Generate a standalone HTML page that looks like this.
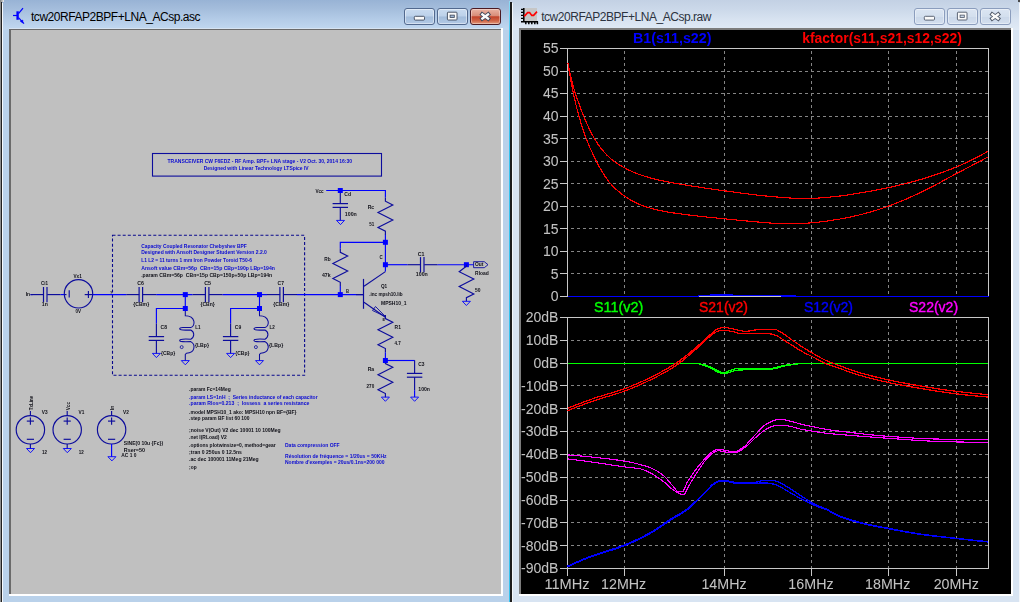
<!DOCTYPE html>
<html lang="en"><head><meta charset="utf-8"><title>LTspice IV - tcw20RFAP2BPF+LNA_ACsp</title>
<style>
html,body{margin:0;padding:0}
body{width:1020px;height:602px;overflow:hidden;position:relative;background:#b9d1ea;font-family:"Liberation Sans", sans-serif;}
.abs{position:absolute}
#lw{left:0;top:0;width:510px;height:602px;background:#b9d1ea;overflow:hidden}
#lw .tb{left:0;top:0;width:510px;height:30px;background:linear-gradient(#98b3d5 0,#a3bcdb 8px,#b2cae6 18px,#bfd6ef 28px)}
#rw{left:510px;top:0;width:510px;height:602px;background:#d8e4f2;overflow:hidden}
#rw .tb{left:0;top:0;width:510px;height:30px;background:linear-gradient(#c3d1e4 0,#ccd9ea 10px,#d8e3f1 20px,#dfe9f5 29px)}
.ttl{font-size:12px;color:#000;white-space:nowrap;letter-spacing:-0.46px}
.btn{top:8px;height:14.8px;width:28.6px;border-radius:3px;box-sizing:content-box}
.a{border:1px solid #52698e;background:linear-gradient(#c9dbf0 0,#bcd1ea 48%,#a2bcdb 52%,#b3cae6 100%);box-shadow:inset 0 0 0 1px rgba(255,255,255,.45)}
.x{border:1px solid #4b1a22;background:linear-gradient(#e9b3a3 0,#d88d79 45%,#c1432a 52%,#cf6446 78%,#e49c7e 100%);box-shadow:inset 0 0 0 1px rgba(255,255,255,.35)}
.i{border:1px solid #8b9dbd;background:linear-gradient(#dbe5f2 0,#d3dfee 50%,#cad7e9 52%,#d3dfee 100%);box-shadow:inset 0 0 0 1px rgba(255,255,255,.4)}
svg{position:absolute;left:0;top:0;will-change:transform}
svg text{font-family:"Liberation Sans", sans-serif;white-space:pre}
</style></head><body>

<div id="lw" class="abs"><div class="tb abs"></div>
<div class="abs" style="left:0;top:0;width:1px;height:602px;background:#8c8c8c"></div>
<div class="abs" style="left:0.9px;top:2px;width:1.2px;height:600px;background:#202020"></div>
<div class="abs" style="left:2.1px;top:2.5px;width:1.1px;height:600px;background:#f6f9fd"></div>
<div class="abs" style="left:1px;top:0;width:3px;height:2px;background:linear-gradient(90deg,#9a9a9a,#e8eef5)"></div>
<div class="abs" style="left:509px;top:1px;width:1px;height:601px;background:linear-gradient(#8fdcf5,#36c3ee 40px)"></div>
<div class="abs" style="left:9px;top:27.6px;width:494.2px;height:568px;background:#fff"></div>
<div class="abs" style="left:9px;top:27.6px;width:492.4px;height:1.2px;background:#d6e3f2"></div>
<div class="abs" style="left:9.4px;top:28.7px;width:492px;height:565.2px;background:#6a6a6a"></div>
<div class="abs" style="left:10.7px;top:29.9px;width:490.7px;height:564px;background:#c0c0c0"></div>
<div class="abs ttl" style="left:31px;top:9.6px">tcw20RFAP2BPF+LNA_ACsp.asc</div>
<div class="abs btn a" style="left:404.2px"></div><div class="abs btn a" style="left:437.1px"></div><div class="abs btn x" style="left:470.1px"></div>
</div>
<div id="rw" class="abs"><div class="tb abs"></div>
<div class="abs" style="left:0;top:2px;width:1.7px;height:600px;background:#1d1d1d"></div>
<div class="abs" style="left:1.7px;top:3px;width:1px;height:599px;background:#f4f7fb"></div>
<div class="abs" style="left:9.4px;top:28.4px;width:493.2px;height:567.2px;background:#fff"></div>
<div class="abs" style="left:9.4px;top:28.4px;width:491.9px;height:565.4px;background:#7c7c7c"></div>
<div class="abs" style="left:10.5px;top:29.8px;width:490.8px;height:564px;background:#000"></div>
<div class="abs ttl" style="left:31.2px;top:9.6px;color:#2c3340">tcw20RFAP2BPF+LNA_ACsp.raw</div>
<div class="abs" style="left:508.6px;top:3px;width:1px;height:599px;background:#f4f7fb"></div>
<div class="abs" style="left:508px;top:0;width:2px;height:2px;background:#4a4a4a"></div>
<div class="abs btn i" style="left:404.2px"></div><div class="abs btn i" style="left:437.1px"></div><div class="abs btn i" style="left:470.2px"></div>
</div>
<svg width="1020" height="602" viewBox="0 0 1020 602">
<g stroke="#0000ff" fill="none" stroke-width="1.2"><path d="M13 15.5H17.5"/><path d="M17.6 11.3V19.8" stroke-width="2.4"/><path d="M18.5 13.6L23 8.2"/><path d="M18.5 17.6L24 23.6"/><path d="M20.4 21.2L22.8 20.2L22.6 22.8Z" fill="#0000ff" stroke-width="0.8"/></g>
<g><rect x="524" y="8" width="13" height="13.4" fill="#c6c6c6"/><path d="M523.8 8V22.4M521 21.8H538" stroke="#000" stroke-width="1.5" fill="none"/><path d="M521 9.4H523.5M521 12.4H523.5M521 15.4H523.5M521 18.4H523.5" stroke="#000" stroke-width="1.4"/><path d="M525.8 21.5V24.2M528.8 21.5V24.2M531.8 21.5V24.2M534.8 21.5V24.2M537.4 21.5V24.2" stroke="#000" stroke-width="1.5"/><path d="M524.2 16.4L527.6 12.6H529.6L531.8 15.4H533.6L537 11.6" stroke="#ff0000" stroke-width="1.6" fill="none"/></g>
<rect x="414.3" y="16.3" width="10.2" height="3.8" rx="1" fill="#fafafa" stroke="#3c4658" stroke-width="0.9"/>
<rect x="447.4" y="12.2" width="9.6" height="7.8" rx="0.8" fill="#fafafa" stroke="#3c4658" stroke-width="0.9"/>
<rect x="450.1" y="15.1" width="4.2" height="2.4" fill="#9fb6d4" stroke="#3c4658" stroke-width="0.8"/>
<path d="M480.6 13.2L489.8 19.8M489.8 13.2L480.6 19.8" stroke="#3c4658" stroke-width="4.1" stroke-linecap="butt" fill="none"/>
<path d="M481.4 13.8L489 19.2M489 13.8L481.4 19.2" stroke="#fafafa" stroke-width="2.3" stroke-linecap="butt" fill="none"/>
<rect x="924.3" y="16.3" width="10.2" height="3.8" rx="1" fill="#fafafa" stroke="#4d5666" stroke-width="0.9"/>
<rect x="957.4" y="12.2" width="9.6" height="7.8" rx="0.8" fill="#fafafa" stroke="#4d5666" stroke-width="0.9"/>
<rect x="960.1" y="15.1" width="4.2" height="2.4" fill="#c9d6e8" stroke="#4d5666" stroke-width="0.8"/>
<path d="M990.6 13.2L999.8 19.8M999.8 13.2L990.6 19.8" stroke="#4d5666" stroke-width="4.1" stroke-linecap="butt" fill="none"/>
<path d="M991.4 13.8L999 19.2M999 13.8L991.4 19.2" stroke="#fafafa" stroke-width="2.3" stroke-linecap="butt" fill="none"/>
<g id="schematic">
<rect x="152.5" y="153.5" width="229" height="22.6" fill="none" stroke="#0c0c9c" stroke-width="1.1"/>
<text x="167.5" y="163.02" font-size="5.6" fill="#0a0ad2" font-weight="bold" textLength="184.6" lengthAdjust="spacingAndGlyphs">TRANSCEIVER CW F6EDZ - RF Amp. BPF+ LNA stage - V2 Oct. 30, 2014 16:30</text>
<text x="203.7" y="170.02" font-size="5.6" fill="#0a0ad2" font-weight="bold" textLength="105" lengthAdjust="spacingAndGlyphs">Designed with Linear Technology LTSpice IV</text>
<rect x="112.5" y="235.3" width="192.1" height="140" fill="none" stroke="#08088c" stroke-width="1.1" stroke-dasharray="3 2.1"/>
<text x="141.2" y="247.72" font-size="5.6" fill="#0a0ad2" font-weight="bold" textLength="105.5" lengthAdjust="spacingAndGlyphs">Capacity Coupled Resonator Chebyshev BPF</text>
<text x="141.2" y="253.82" font-size="5.6" fill="#0a0ad2" font-weight="bold" textLength="125.7" lengthAdjust="spacingAndGlyphs">Designed with Ansoft Designer Student Version 2.2.0</text>
<text x="141.2" y="262.12" font-size="5.6" fill="#0a0ad2" font-weight="bold" textLength="110.8" lengthAdjust="spacingAndGlyphs">L1 L2 = 11 turns 1 mm Iron Powder Toroid T50-6</text>
<text x="141.2" y="270.12" font-size="5.6" fill="#0a0ad2" font-weight="bold" textLength="133.7" lengthAdjust="spacingAndGlyphs">Ansoft value CBm=56p  CBn=15p CBp=190p LBp=194n</text>
<text x="141.2" y="277.02" font-size="5.6" fill="#101018" font-weight="bold" textLength="131" lengthAdjust="spacingAndGlyphs">.param CBm=56p  CBn=15p CBp=150p+50p LBp=194n</text>
<polyline points="92.7,294.6 126.2,294.6" fill="none" stroke="#0000ff" stroke-width="1.15"/>
<polyline points="156.2,294.6 192.5,294.6" fill="none" stroke="#0000ff" stroke-width="1.15"/>
<polyline points="222.5,294.6 267,294.6" fill="none" stroke="#0000ff" stroke-width="1.15"/>
<polyline points="297,294.6 363.5,294.6" fill="none" stroke="#0000ff" stroke-width="1.15"/>
<text x="25.7" y="296.12" font-size="5.6" fill="#101018" font-weight="bold" textLength="4.4" lengthAdjust="spacingAndGlyphs">In</text>
<polyline points="30.5,294.6 32.5,294.6" fill="none" stroke="#0000ff" stroke-width="1.15"/>
<polyline points="30.6,294.6 43.7,294.6" fill="none" stroke="#0c0c9c" stroke-width="1.15"/>
<polyline points="43.5,287 43.5,302.2" fill="none" stroke="#0c0c9c" stroke-width="1.2"/>
<polyline points="47,287 47,302.2" fill="none" stroke="#0c0c9c" stroke-width="1.2"/>
<polyline points="47.2,294.6 60.6,294.6" fill="none" stroke="#0c0c9c" stroke-width="1.15"/>
<polyline points="60.6,294.6 64.3,294.6" fill="none" stroke="#0000ff" stroke-width="1.15"/>
<text x="41.1" y="284.92" font-size="5.6" fill="#101018" font-weight="bold" textLength="7" lengthAdjust="spacingAndGlyphs">Ci1</text>
<text x="41.8" y="306.12" font-size="5.6" fill="#101018" font-weight="bold" textLength="6" lengthAdjust="spacingAndGlyphs">1n</text>
<circle cx="78.5" cy="293.8" r="14.2" fill="none" stroke="#0c0c9c" stroke-width="1.15"/>
<polyline points="64.3,294.6 66.5,294.6" fill="none" stroke="#0c0c9c" stroke-width="1.15"/>
<polyline points="69.2,290.3 69.2,297.4" fill="none" stroke="#0c0c9c" stroke-width="1.15"/>
<polyline points="84.7,294.6 92.7,294.6" fill="none" stroke="#0c0c9c" stroke-width="1.15"/>
<polyline points="88.4,291 88.4,298" fill="none" stroke="#0c0c9c" stroke-width="1.15"/>
<text x="73.5" y="278.22" font-size="5.6" fill="#101018" font-weight="bold" textLength="8.2" lengthAdjust="spacingAndGlyphs">Vx1</text>
<text x="75.5" y="313.12" font-size="5.6" fill="#101018" font-weight="bold" textLength="5.5" lengthAdjust="spacingAndGlyphs">0V</text>
<text x="110.4" y="292.64" font-size="4" fill="#101018" font-weight="bold" textLength="1.6" lengthAdjust="spacingAndGlyphs">y</text>
<polyline points="126.2,294.6 139.3,294.6" fill="none" stroke="#0c0c9c" stroke-width="1.15"/>
<polyline points="139.1,287 139.1,302.2" fill="none" stroke="#0c0c9c" stroke-width="1.2"/>
<polyline points="142.6,287 142.6,302.2" fill="none" stroke="#0c0c9c" stroke-width="1.2"/>
<polyline points="142.8,294.6 156.2,294.6" fill="none" stroke="#0c0c9c" stroke-width="1.15"/>
<text x="137.2" y="284.72" font-size="5.6" fill="#101018" font-weight="bold" textLength="6.7" lengthAdjust="spacingAndGlyphs">C6</text>
<text x="133.2" y="306.22" font-size="5.6" fill="#101018" font-weight="bold" textLength="16" lengthAdjust="spacingAndGlyphs">{CBm}</text>
<polyline points="192.5,294.6 205.6,294.6" fill="none" stroke="#0c0c9c" stroke-width="1.15"/>
<polyline points="205.4,287 205.4,302.2" fill="none" stroke="#0c0c9c" stroke-width="1.2"/>
<polyline points="208.9,287 208.9,302.2" fill="none" stroke="#0c0c9c" stroke-width="1.2"/>
<polyline points="209.1,294.6 222.5,294.6" fill="none" stroke="#0c0c9c" stroke-width="1.15"/>
<text x="204.2" y="284.72" font-size="5.6" fill="#101018" font-weight="bold" textLength="6.9" lengthAdjust="spacingAndGlyphs">C5</text>
<text x="200.5" y="306.22" font-size="5.6" fill="#101018" font-weight="bold" textLength="14.3" lengthAdjust="spacingAndGlyphs">{CBn}</text>
<polyline points="267,294.6 280.1,294.6" fill="none" stroke="#0c0c9c" stroke-width="1.15"/>
<polyline points="279.9,287 279.9,302.2" fill="none" stroke="#0c0c9c" stroke-width="1.2"/>
<polyline points="283.4,287 283.4,302.2" fill="none" stroke="#0c0c9c" stroke-width="1.2"/>
<polyline points="283.6,294.6 297,294.6" fill="none" stroke="#0c0c9c" stroke-width="1.15"/>
<text x="277.6" y="284.72" font-size="5.6" fill="#101018" font-weight="bold" textLength="6.4" lengthAdjust="spacingAndGlyphs">C7</text>
<text x="273.3" y="306.22" font-size="5.6" fill="#101018" font-weight="bold" textLength="16" lengthAdjust="spacingAndGlyphs">{CBm}</text>
<polyline points="185.3,294.6 185.3,308.5" fill="none" stroke="#0000ff" stroke-width="1.15"/>
<polyline points="185.3,308.5 156.4,308.5 156.4,323.5" fill="none" stroke="#0000ff" stroke-width="1.15"/>
<polyline points="156.4,323.5 156.4,336.6" fill="none" stroke="#0c0c9c" stroke-width="1.15"/>
<polyline points="148.7,336.6 164.1,336.6" fill="none" stroke="#0c0c9c" stroke-width="1.2"/>
<polyline points="148.7,340.4 164.1,340.4" fill="none" stroke="#0c0c9c" stroke-width="1.2"/>
<polyline points="156.4,340.4 156.4,353.5" fill="none" stroke="#0c0c9c" stroke-width="1.15"/>
<polyline points="152.4,353.4 160.4,353.4 156.4,357.6 152.4,353.4" fill="none" stroke="#0000ff" stroke-width="0.9"/>
<path d="M185.3 308.5 L185.3 315.7 C195.8 315.9 195.8 326.1 190.8 327.6 C184.3 327.3 179.7 327.4 179.7 328.8 C179.7 330.2 184.3 330.3 190.8 330 C194.7 332 194.7 337.2 190.8 339.2 C184.3 338.9 179.7 339 179.7 340.4 C179.7 341.8 184.3 341.9 190.8 341.6 C195.8 344.4 195.3 353.1 186.5 353.2 L185.3 354.5 L185.3 360.5" fill="none" stroke="#0c0c9c" stroke-width="1.05"/>
<circle cx="181.7" cy="347.1" r="1.5" fill="none" stroke="#0c0c9c" stroke-width="0.8"/>
<polyline points="181.3,360.6 189.3,360.6 185.3,364.8 181.3,360.6" fill="none" stroke="#0000ff" stroke-width="0.9"/>
<rect x="182.8" y="292.1" width="5" height="5" fill="#0000ff"/>
<rect x="182.8" y="306" width="5" height="5" fill="#0000ff"/>
<text x="160.6" y="328.82" font-size="5.6" fill="#101018" font-weight="bold" textLength="6.4" lengthAdjust="spacingAndGlyphs">C8</text>
<text x="161.1" y="355.42" font-size="5.6" fill="#101018" font-weight="bold" textLength="14.1" lengthAdjust="spacingAndGlyphs">{CBp}</text>
<text x="195.2" y="328.82" font-size="5.6" fill="#101018" font-weight="bold" textLength="5.3" lengthAdjust="spacingAndGlyphs">L1</text>
<text x="194.9" y="347.12" font-size="5.6" fill="#101018" font-weight="bold" textLength="14.1" lengthAdjust="spacingAndGlyphs">{LBp}</text>
<polyline points="259.5,294.6 259.5,308.5" fill="none" stroke="#0000ff" stroke-width="1.15"/>
<polyline points="259.5,308.5 230.6,308.5 230.6,323.5" fill="none" stroke="#0000ff" stroke-width="1.15"/>
<polyline points="230.6,323.5 230.6,336.6" fill="none" stroke="#0c0c9c" stroke-width="1.15"/>
<polyline points="222.9,336.6 238.3,336.6" fill="none" stroke="#0c0c9c" stroke-width="1.2"/>
<polyline points="222.9,340.4 238.3,340.4" fill="none" stroke="#0c0c9c" stroke-width="1.2"/>
<polyline points="230.6,340.4 230.6,353.5" fill="none" stroke="#0c0c9c" stroke-width="1.15"/>
<polyline points="226.6,353.4 234.6,353.4 230.6,357.6 226.6,353.4" fill="none" stroke="#0000ff" stroke-width="0.9"/>
<path d="M259.5 308.5 L259.5 315.7 C270 315.9 270 326.1 265 327.6 C258.5 327.3 253.9 327.4 253.9 328.8 C253.9 330.2 258.5 330.3 265 330 C268.9 332 268.9 337.2 265 339.2 C258.5 338.9 253.9 339 253.9 340.4 C253.9 341.8 258.5 341.9 265 341.6 C270 344.4 269.5 353.1 260.7 353.2 L259.5 354.5 L259.5 360.5" fill="none" stroke="#0c0c9c" stroke-width="1.05"/>
<circle cx="255.9" cy="347.1" r="1.5" fill="none" stroke="#0c0c9c" stroke-width="0.8"/>
<polyline points="255.5,360.6 263.5,360.6 259.5,364.8 255.5,360.6" fill="none" stroke="#0000ff" stroke-width="0.9"/>
<rect x="257" y="292.1" width="5" height="5" fill="#0000ff"/>
<rect x="257" y="306" width="5" height="5" fill="#0000ff"/>
<text x="234.8" y="328.82" font-size="5.6" fill="#101018" font-weight="bold" textLength="6.4" lengthAdjust="spacingAndGlyphs">C9</text>
<text x="235.3" y="355.42" font-size="5.6" fill="#101018" font-weight="bold" textLength="14.1" lengthAdjust="spacingAndGlyphs">{CBp}</text>
<text x="269.4" y="328.82" font-size="5.6" fill="#101018" font-weight="bold" textLength="5.3" lengthAdjust="spacingAndGlyphs">L2</text>
<text x="269.1" y="347.12" font-size="5.6" fill="#101018" font-weight="bold" textLength="14.1" lengthAdjust="spacingAndGlyphs">{LBp}</text>
<text x="315.4" y="192.72" font-size="5.6" fill="#101018" font-weight="bold" textLength="8.3" lengthAdjust="spacingAndGlyphs">Vcc</text>
<polyline points="326.2,190.5 385.4,190.5 385.4,197.6" fill="none" stroke="#0000ff" stroke-width="1.15"/>
<polyline points="340.3,190.5 340.3,203.6" fill="none" stroke="#0c0c9c" stroke-width="1.15"/>
<polyline points="332.6,203.6 348,203.6" fill="none" stroke="#0c0c9c" stroke-width="1.2"/>
<polyline points="332.6,207.4 348,207.4" fill="none" stroke="#0c0c9c" stroke-width="1.2"/>
<polyline points="340.3,207.4 340.3,220.5" fill="none" stroke="#0c0c9c" stroke-width="1.15"/>
<polyline points="336.5,220.4 344.5,220.4 340.5,224.6 336.5,220.4" fill="none" stroke="#0000ff" stroke-width="0.9"/>
<rect x="337.8" y="188" width="5" height="5" fill="#0000ff"/>
<text x="344.3" y="196.22" font-size="5.6" fill="#101018" font-weight="bold" textLength="6.7" lengthAdjust="spacingAndGlyphs">Cd</text>
<text x="344.8" y="216.12" font-size="5.6" fill="#101018" font-weight="bold" textLength="12" lengthAdjust="spacingAndGlyphs">100n</text>
<polyline points="385.4,197.5 385.4,201.2 392.8,204.95 378,212.45 392.8,219.95 378,227.45 385.4,231.2 385.4,234.9" fill="none" stroke="#0c0c9c" stroke-width="1.15"/>
<text x="367.7" y="208.92" font-size="5.6" fill="#101018" font-weight="bold" textLength="6.5" lengthAdjust="spacingAndGlyphs">Rc</text>
<text x="369.2" y="226.12" font-size="5.6" fill="#101018" font-weight="bold" textLength="5" lengthAdjust="spacingAndGlyphs">51</text>
<polyline points="385.4,234.8 385.4,271.6" fill="none" stroke="#0000ff" stroke-width="1.15"/>
<polyline points="385.4,242.3 340.3,242.3 340.3,248.6" fill="none" stroke="#0000ff" stroke-width="1.15"/>
<polyline points="340.3,248.6 340.3,252.3 347.7,256.05 332.9,263.55 347.7,271.05 332.9,278.55 340.3,282.3 340.3,286" fill="none" stroke="#0c0c9c" stroke-width="1.15"/>
<polyline points="340.3,286 340.3,294.6" fill="none" stroke="#0000ff" stroke-width="1.15"/>
<text x="324.2" y="261.22" font-size="5.6" fill="#101018" font-weight="bold" textLength="6.4" lengthAdjust="spacingAndGlyphs">Rb</text>
<text x="321.9" y="276.62" font-size="5.6" fill="#101018" font-weight="bold" textLength="8.7" lengthAdjust="spacingAndGlyphs">47k</text>
<rect x="382.9" y="239.8" width="5" height="5" fill="#0000ff"/>
<rect x="382.9" y="262.2" width="5" height="5" fill="#0000ff"/>
<rect x="337.8" y="292.1" width="5" height="5" fill="#0000ff"/>
<text x="346" y="292.82" font-size="5.6" fill="#101018" font-weight="bold" textLength="3" lengthAdjust="spacingAndGlyphs">B</text>
<text x="379.6" y="259.02" font-size="4.5" fill="#101018" font-weight="bold" textLength="3.2" lengthAdjust="spacingAndGlyphs">C</text>
<polyline points="363.5,278.9 363.5,308.8" fill="none" stroke="#0c0c9c" stroke-width="1.2"/>
<polyline points="364,286.2 385.4,271.6" fill="none" stroke="#0c0c9c" stroke-width="1.15"/>
<polyline points="356,294.6 363.5,294.6" fill="none" stroke="#0c0c9c" stroke-width="1.15"/>
<polyline points="364,302.2 385.4,317.2" fill="none" stroke="#0c0c9c" stroke-width="1.15"/>
<polyline points="372.5,310.5 375.5,306.5 385.5,316.6 372.5,310.5" fill="none" stroke="#0c0c9c" stroke-width="0.9"/>
<text x="381" y="287.92" font-size="5.6" fill="#101018" font-weight="bold" textLength="6.2" lengthAdjust="spacingAndGlyphs">Q1</text>
<text x="369.2" y="296.12" font-size="5.6" fill="#101018" font-weight="bold" textLength="33.4" lengthAdjust="spacingAndGlyphs">.inc mpsh10.lib</text>
<text x="381" y="304.82" font-size="5.6" fill="#101018" font-weight="bold" textLength="25.6" lengthAdjust="spacingAndGlyphs">MPSH10_1</text>
<text x="382.4" y="321.11" font-size="4.2" fill="#101018" font-weight="bold" textLength="2.6" lengthAdjust="spacingAndGlyphs">E</text>
<polyline points="385.4,264.7 407.6,264.7" fill="none" stroke="#0000ff" stroke-width="1.15"/>
<polyline points="407.6,264.7 420.7,264.7" fill="none" stroke="#0c0c9c" stroke-width="1.15"/>
<polyline points="420.5,257.1 420.5,272.3" fill="none" stroke="#0c0c9c" stroke-width="1.2"/>
<polyline points="424,257.1 424,272.3" fill="none" stroke="#0c0c9c" stroke-width="1.2"/>
<polyline points="424.2,264.7 437.6,264.7" fill="none" stroke="#0c0c9c" stroke-width="1.15"/>
<polyline points="437.6,264.7 473.6,264.7" fill="none" stroke="#0000ff" stroke-width="1.15"/>
<text x="417.8" y="256.02" font-size="5.6" fill="#101018" font-weight="bold" textLength="6.7" lengthAdjust="spacingAndGlyphs">C1</text>
<text x="415.8" y="276.12" font-size="5.6" fill="#101018" font-weight="bold" textLength="12" lengthAdjust="spacingAndGlyphs">100n</text>
<rect x="463.9" y="262.2" width="5" height="5" fill="#0000ff"/>
<polyline points="473.6,261.7 484.3,261.7 488,264.7 484.3,267.7 473.6,267.7 473.6,261.7" fill="none" stroke="#0c0c9c" stroke-width="0.9"/>
<text x="475" y="266.43" font-size="4.8" fill="#101018" font-weight="bold" textLength="8.4" lengthAdjust="spacingAndGlyphs">Out</text>
<polyline points="466.4,264.7 466.4,266.2 459.2,271.7 473.8,279.1 459.2,286.6 473.8,294.1 466.4,297.7 466.4,301.3" fill="none" stroke="#0c0c9c" stroke-width="1.15"/>
<polyline points="462.4,301.3 470.4,301.3 466.4,305.5 462.4,301.3" fill="none" stroke="#0000ff" stroke-width="0.9"/>
<text x="475.1" y="274.92" font-size="5.6" fill="#101018" font-weight="bold" textLength="13.7" lengthAdjust="spacingAndGlyphs">Rload</text>
<text x="475.1" y="291.62" font-size="5.6" fill="#101018" font-weight="bold" textLength="5.5" lengthAdjust="spacingAndGlyphs">50</text>
<polyline points="385.4,314.9 385.4,318.6 392.8,322.35 378,329.85 392.8,337.35 378,344.85 385.4,348.6 385.4,352.3" fill="none" stroke="#0c0c9c" stroke-width="1.15"/>
<text x="394.6" y="328.92" font-size="5.6" fill="#101018" font-weight="bold" textLength="6.3" lengthAdjust="spacingAndGlyphs">R1</text>
<text x="394.6" y="345.02" font-size="5.6" fill="#101018" font-weight="bold" textLength="6.3" lengthAdjust="spacingAndGlyphs">4.7</text>
<polyline points="385.4,352.3 385.4,360.5" fill="none" stroke="#0000ff" stroke-width="1.15"/>
<polyline points="385.4,360.5 414.6,360.5" fill="none" stroke="#0000ff" stroke-width="1.15"/>
<polyline points="414.6,360.3 414.6,373.4" fill="none" stroke="#0c0c9c" stroke-width="1.15"/>
<polyline points="406.9,373.4 422.3,373.4" fill="none" stroke="#0c0c9c" stroke-width="1.2"/>
<polyline points="406.9,377.2 422.3,377.2" fill="none" stroke="#0c0c9c" stroke-width="1.2"/>
<polyline points="414.6,377.2 414.6,390.3" fill="none" stroke="#0c0c9c" stroke-width="1.15"/>
<polyline points="410.6,397.1 418.6,397.1 414.6,401.3 410.6,397.1" fill="none" stroke="#0000ff" stroke-width="0.9"/>
<polyline points="414.6,390.3 414.6,397.1" fill="none" stroke="#0000ff" stroke-width="1.15"/>
<text x="418.3" y="366.02" font-size="5.6" fill="#101018" font-weight="bold" textLength="6.2" lengthAdjust="spacingAndGlyphs">C3</text>
<text x="418.3" y="391.12" font-size="5.6" fill="#101018" font-weight="bold" textLength="11.7" lengthAdjust="spacingAndGlyphs">100n</text>
<polyline points="385.4,359.9 385.4,363.6 392.8,367.35 378,374.85 392.8,382.35 378,389.85 385.4,393.6 385.4,397.3" fill="none" stroke="#0c0c9c" stroke-width="1.15"/>
<polyline points="381.4,397.1 389.4,397.1 385.4,401.3 381.4,397.1" fill="none" stroke="#0000ff" stroke-width="0.9"/>
<rect x="382.9" y="358" width="5" height="5" fill="#0000ff"/>
<text x="367.7" y="371.02" font-size="5.6" fill="#101018" font-weight="bold" textLength="6.5" lengthAdjust="spacingAndGlyphs">Ra</text>
<text x="366.5" y="387.92" font-size="5.6" fill="#101018" font-weight="bold" textLength="7.7" lengthAdjust="spacingAndGlyphs">270</text>
<circle cx="30.4" cy="429.8" r="14.2" fill="none" stroke="#0c0c9c" stroke-width="1.15"/>
<polyline points="30.4,411.1 30.4,415.6" fill="none" stroke="#0c0c9c" stroke-width="1.15"/>
<polyline points="26.8,421.1 34,421.1" fill="none" stroke="#0c0c9c" stroke-width="1.15"/>
<polyline points="30.4,417.5 30.4,424.7" fill="none" stroke="#0c0c9c" stroke-width="1.15"/>
<polyline points="26.8,439.3 34,439.3" fill="none" stroke="#0c0c9c" stroke-width="1.15"/>
<text x="41.8" y="413.92" font-size="5.6" fill="#101018" font-weight="bold" textLength="5.8" lengthAdjust="spacingAndGlyphs">V3</text>
<text x="30.8" y="412.21" font-size="5.3" fill="#101018" font-weight="bold" textLength="14.6" lengthAdjust="spacingAndGlyphs" transform="rotate(-90 30.8 410.3)">TxLine</text>
<polyline points="30.4,444 30.4,448.5" fill="none" stroke="#0c0c9c" stroke-width="1.15"/>
<polyline points="26.5,448.5 34.5,448.5 30.5,452.7 26.5,448.5" fill="none" stroke="#0000ff" stroke-width="0.9"/>
<text x="42" y="454.22" font-size="5.6" fill="#101018" font-weight="bold" textLength="5" lengthAdjust="spacingAndGlyphs">12</text>
<circle cx="67.2" cy="429.8" r="14.2" fill="none" stroke="#0c0c9c" stroke-width="1.15"/>
<polyline points="67.2,411.1 67.2,415.6" fill="none" stroke="#0c0c9c" stroke-width="1.15"/>
<polyline points="63.6,421.1 70.8,421.1" fill="none" stroke="#0c0c9c" stroke-width="1.15"/>
<polyline points="67.2,417.5 67.2,424.7" fill="none" stroke="#0c0c9c" stroke-width="1.15"/>
<polyline points="63.6,439.3 70.8,439.3" fill="none" stroke="#0c0c9c" stroke-width="1.15"/>
<text x="78.6" y="413.92" font-size="5.6" fill="#101018" font-weight="bold" textLength="5.8" lengthAdjust="spacingAndGlyphs">V1</text>
<text x="67.6" y="412.21" font-size="5.3" fill="#101018" font-weight="bold" textLength="8.4" lengthAdjust="spacingAndGlyphs" transform="rotate(-90 67.6 410.3)">Vcc</text>
<polyline points="67.2,444 67.2,448.5" fill="none" stroke="#0c0c9c" stroke-width="1.15"/>
<polyline points="63.3,448.5 71.3,448.5 67.3,452.7 63.3,448.5" fill="none" stroke="#0000ff" stroke-width="0.9"/>
<text x="78.8" y="454.22" font-size="5.6" fill="#101018" font-weight="bold" textLength="5" lengthAdjust="spacingAndGlyphs">12</text>
<circle cx="111.6" cy="429.8" r="14.2" fill="none" stroke="#0c0c9c" stroke-width="1.15"/>
<polyline points="111.6,411.1 111.6,415.6" fill="none" stroke="#0c0c9c" stroke-width="1.15"/>
<polyline points="108,421.1 115.2,421.1" fill="none" stroke="#0c0c9c" stroke-width="1.15"/>
<polyline points="111.6,417.5 111.6,424.7" fill="none" stroke="#0c0c9c" stroke-width="1.15"/>
<polyline points="108,439.3 115.2,439.3" fill="none" stroke="#0c0c9c" stroke-width="1.15"/>
<text x="123" y="413.92" font-size="5.6" fill="#101018" font-weight="bold" textLength="5.8" lengthAdjust="spacingAndGlyphs">V2</text>
<text x="112" y="412.21" font-size="5.3" fill="#101018" font-weight="bold" textLength="4.6" lengthAdjust="spacingAndGlyphs" transform="rotate(-90 112 410.3)">In</text>
<polyline points="111.6,444 111.6,456.7" fill="none" stroke="#0000ff" stroke-width="1.15"/>
<polyline points="107.9,456.7 115.9,456.7 111.9,460.9 107.9,456.7" fill="none" stroke="#0000ff" stroke-width="0.9"/>
<text x="123.8" y="445.02" font-size="5.6" fill="#101018" font-weight="bold" textLength="39.3" lengthAdjust="spacingAndGlyphs">SINE(0 10u {Fc})</text>
<text x="123.8" y="452.22" font-size="5.6" fill="#101018" font-weight="bold" textLength="21.2" lengthAdjust="spacingAndGlyphs">Rser=50</text>
<text x="121.3" y="456.92" font-size="5.6" fill="#101018" font-weight="bold" textLength="15.2" lengthAdjust="spacingAndGlyphs">AC 1 0</text>
<text x="189.1" y="391.22" font-size="5.6" fill="#101018" font-weight="bold" textLength="41.6" lengthAdjust="spacingAndGlyphs">.param Fc=14Meg</text>
<text x="189.1" y="399.02" font-size="5.6" fill="#0a0ad2" font-weight="bold" textLength="128.5" lengthAdjust="spacingAndGlyphs">.param LS=1nH  ;  Series inductance of each capacitor</text>
<text x="189.1" y="405.02" font-size="5.6" fill="#0a0ad2" font-weight="bold" textLength="120.3" lengthAdjust="spacingAndGlyphs">.param Rlos=0.213  ;  lossess  a series resistance</text>
<text x="189.1" y="414.12" font-size="5.6" fill="#101018" font-weight="bold" textLength="107.4" lengthAdjust="spacingAndGlyphs">.model MPSH10_1 ako: MPSH10 npn BF={BF}</text>
<text x="189.1" y="420.12" font-size="5.6" fill="#101018" font-weight="bold" textLength="60.4" lengthAdjust="spacingAndGlyphs">.step param BF list 60 100</text>
<text x="189.1" y="432.22" font-size="5.6" fill="#101018" font-weight="bold" textLength="91.6" lengthAdjust="spacingAndGlyphs">;noise V(Out) V2 dec 10001 10 100Meg</text>
<text x="189.1" y="439.12" font-size="5.6" fill="#101018" font-weight="bold" textLength="37.7" lengthAdjust="spacingAndGlyphs">.net I(RLoad) V2</text>
<text x="189.1" y="447.12" font-size="5.6" fill="#101018" font-weight="bold" textLength="86.5" lengthAdjust="spacingAndGlyphs">.options plotwinsize=0, method=gear</text>
<text x="189.1" y="454.02" font-size="5.6" fill="#101018" font-weight="bold" textLength="52.8" lengthAdjust="spacingAndGlyphs">;tran 0 250us 0 12.5ns</text>
<text x="189.1" y="461.12" font-size="5.6" fill="#101018" font-weight="bold" textLength="69.6" lengthAdjust="spacingAndGlyphs">.ac dec 100001 11Meg 21Meg</text>
<text x="189.1" y="469.32" font-size="5.6" fill="#101018" font-weight="bold" textLength="7.5" lengthAdjust="spacingAndGlyphs">;op</text>
<text x="285" y="447.12" font-size="5.6" fill="#0a0ad2" font-weight="bold" textLength="54.6" lengthAdjust="spacingAndGlyphs">Data compression OFF</text>
<text x="285" y="458.32" font-size="5.6" fill="#0a0ad2" font-weight="bold" textLength="101.6" lengthAdjust="spacingAndGlyphs">Résolution de fréquence = 1/20us = 50KHz</text>
<text x="285" y="464.42" font-size="5.6" fill="#0a0ad2" font-weight="bold" textLength="99.5" lengthAdjust="spacingAndGlyphs">Nombre d'exemples = 20us/0.1ns=200 000</text>
</g>
<g id="plot">
<g shape-rendering="crispEdges">
<line x1="624.5" y1="48.5" x2="624.5" y2="296.5" stroke="#858585" stroke-width="1" stroke-dasharray="3 3" stroke-dashoffset="-2"/>
<line x1="724.5" y1="48.5" x2="724.5" y2="296.5" stroke="#858585" stroke-width="1" stroke-dasharray="3 3" stroke-dashoffset="-2"/>
<line x1="811.5" y1="48.5" x2="811.5" y2="296.5" stroke="#858585" stroke-width="1" stroke-dasharray="3 3" stroke-dashoffset="-2"/>
<line x1="888.5" y1="48.5" x2="888.5" y2="296.5" stroke="#858585" stroke-width="1" stroke-dasharray="3 3" stroke-dashoffset="-2"/>
<line x1="956.5" y1="48.5" x2="956.5" y2="296.5" stroke="#858585" stroke-width="1" stroke-dasharray="3 3" stroke-dashoffset="-2"/>
<line x1="624.5" y1="317.5" x2="624.5" y2="568.5" stroke="#858585" stroke-width="1" stroke-dasharray="3 3" stroke-dashoffset="-2"/>
<line x1="724.5" y1="317.5" x2="724.5" y2="568.5" stroke="#858585" stroke-width="1" stroke-dasharray="3 3" stroke-dashoffset="-2"/>
<line x1="811.5" y1="317.5" x2="811.5" y2="568.5" stroke="#858585" stroke-width="1" stroke-dasharray="3 3" stroke-dashoffset="-2"/>
<line x1="888.5" y1="317.5" x2="888.5" y2="568.5" stroke="#858585" stroke-width="1" stroke-dasharray="3 3" stroke-dashoffset="-2"/>
<line x1="956.5" y1="317.5" x2="956.5" y2="568.5" stroke="#858585" stroke-width="1" stroke-dasharray="3 3" stroke-dashoffset="-2"/>
<line x1="568.5" y1="273.5" x2="988.5" y2="273.5" stroke="#858585" stroke-width="1" stroke-dasharray="3 3" stroke-dashoffset="-2"/>
<line x1="568.5" y1="545.5" x2="988.5" y2="545.5" stroke="#858585" stroke-width="1" stroke-dasharray="3 3" stroke-dashoffset="-2"/>
<line x1="568.5" y1="251.5" x2="988.5" y2="251.5" stroke="#858585" stroke-width="1" stroke-dasharray="3 3" stroke-dashoffset="-2"/>
<line x1="568.5" y1="522.5" x2="988.5" y2="522.5" stroke="#858585" stroke-width="1" stroke-dasharray="3 3" stroke-dashoffset="-2"/>
<line x1="568.5" y1="228.5" x2="988.5" y2="228.5" stroke="#858585" stroke-width="1" stroke-dasharray="3 3" stroke-dashoffset="-2"/>
<line x1="568.5" y1="500.5" x2="988.5" y2="500.5" stroke="#858585" stroke-width="1" stroke-dasharray="3 3" stroke-dashoffset="-2"/>
<line x1="568.5" y1="206.5" x2="988.5" y2="206.5" stroke="#858585" stroke-width="1" stroke-dasharray="3 3" stroke-dashoffset="-2"/>
<line x1="568.5" y1="477.5" x2="988.5" y2="477.5" stroke="#858585" stroke-width="1" stroke-dasharray="3 3" stroke-dashoffset="-2"/>
<line x1="568.5" y1="183.5" x2="988.5" y2="183.5" stroke="#858585" stroke-width="1" stroke-dasharray="3 3" stroke-dashoffset="-2"/>
<line x1="568.5" y1="454.5" x2="988.5" y2="454.5" stroke="#858585" stroke-width="1" stroke-dasharray="3 3" stroke-dashoffset="-2"/>
<line x1="568.5" y1="161.5" x2="988.5" y2="161.5" stroke="#858585" stroke-width="1" stroke-dasharray="3 3" stroke-dashoffset="-2"/>
<line x1="568.5" y1="431.5" x2="988.5" y2="431.5" stroke="#858585" stroke-width="1" stroke-dasharray="3 3" stroke-dashoffset="-2"/>
<line x1="568.5" y1="138.5" x2="988.5" y2="138.5" stroke="#858585" stroke-width="1" stroke-dasharray="3 3" stroke-dashoffset="-2"/>
<line x1="568.5" y1="408.5" x2="988.5" y2="408.5" stroke="#858585" stroke-width="1" stroke-dasharray="3 3" stroke-dashoffset="-2"/>
<line x1="568.5" y1="116.5" x2="988.5" y2="116.5" stroke="#858585" stroke-width="1" stroke-dasharray="3 3" stroke-dashoffset="-2"/>
<line x1="568.5" y1="385.5" x2="988.5" y2="385.5" stroke="#858585" stroke-width="1" stroke-dasharray="3 3" stroke-dashoffset="-2"/>
<line x1="568.5" y1="93.5" x2="988.5" y2="93.5" stroke="#858585" stroke-width="1" stroke-dasharray="3 3" stroke-dashoffset="-2"/>
<line x1="568.5" y1="363.5" x2="988.5" y2="363.5" stroke="#858585" stroke-width="1" stroke-dasharray="3 3" stroke-dashoffset="-2"/>
<line x1="568.5" y1="71.5" x2="988.5" y2="71.5" stroke="#858585" stroke-width="1" stroke-dasharray="3 3" stroke-dashoffset="-2"/>
<line x1="568.5" y1="340.5" x2="988.5" y2="340.5" stroke="#858585" stroke-width="1" stroke-dasharray="3 3" stroke-dashoffset="-2"/>
<rect x="567.5" y="48.5" width="421" height="248" fill="none" stroke="#c8c8c8" stroke-width="1"/>
<rect x="567.5" y="317.5" width="421" height="251" fill="none" stroke="#c8c8c8" stroke-width="1"/>
<line x1="560" y1="296.5" x2="567.5" y2="296.5" stroke="#c8c8c8" stroke-width="1"/>
<line x1="560" y1="568.5" x2="567.5" y2="568.5" stroke="#c8c8c8" stroke-width="1"/>
<line x1="560" y1="273.5" x2="567.5" y2="273.5" stroke="#c8c8c8" stroke-width="1"/>
<line x1="560" y1="545.5" x2="567.5" y2="545.5" stroke="#c8c8c8" stroke-width="1"/>
<line x1="560" y1="251.5" x2="567.5" y2="251.5" stroke="#c8c8c8" stroke-width="1"/>
<line x1="560" y1="522.5" x2="567.5" y2="522.5" stroke="#c8c8c8" stroke-width="1"/>
<line x1="560" y1="228.5" x2="567.5" y2="228.5" stroke="#c8c8c8" stroke-width="1"/>
<line x1="560" y1="500.5" x2="567.5" y2="500.5" stroke="#c8c8c8" stroke-width="1"/>
<line x1="560" y1="206.5" x2="567.5" y2="206.5" stroke="#c8c8c8" stroke-width="1"/>
<line x1="560" y1="477.5" x2="567.5" y2="477.5" stroke="#c8c8c8" stroke-width="1"/>
<line x1="560" y1="183.5" x2="567.5" y2="183.5" stroke="#c8c8c8" stroke-width="1"/>
<line x1="560" y1="454.5" x2="567.5" y2="454.5" stroke="#c8c8c8" stroke-width="1"/>
<line x1="560" y1="161.5" x2="567.5" y2="161.5" stroke="#c8c8c8" stroke-width="1"/>
<line x1="560" y1="431.5" x2="567.5" y2="431.5" stroke="#c8c8c8" stroke-width="1"/>
<line x1="560" y1="138.5" x2="567.5" y2="138.5" stroke="#c8c8c8" stroke-width="1"/>
<line x1="560" y1="408.5" x2="567.5" y2="408.5" stroke="#c8c8c8" stroke-width="1"/>
<line x1="560" y1="116.5" x2="567.5" y2="116.5" stroke="#c8c8c8" stroke-width="1"/>
<line x1="560" y1="385.5" x2="567.5" y2="385.5" stroke="#c8c8c8" stroke-width="1"/>
<line x1="560" y1="93.5" x2="567.5" y2="93.5" stroke="#c8c8c8" stroke-width="1"/>
<line x1="560" y1="363.5" x2="567.5" y2="363.5" stroke="#c8c8c8" stroke-width="1"/>
<line x1="560" y1="71.5" x2="567.5" y2="71.5" stroke="#c8c8c8" stroke-width="1"/>
<line x1="560" y1="340.5" x2="567.5" y2="340.5" stroke="#c8c8c8" stroke-width="1"/>
<line x1="560" y1="48.5" x2="567.5" y2="48.5" stroke="#c8c8c8" stroke-width="1"/>
<line x1="560" y1="317.5" x2="567.5" y2="317.5" stroke="#c8c8c8" stroke-width="1"/>
<line x1="567.5" y1="568.5" x2="567.5" y2="575.5" stroke="#c8c8c8" stroke-width="1"/>
<line x1="624.5" y1="568.5" x2="624.5" y2="575.5" stroke="#c8c8c8" stroke-width="1"/>
<line x1="724.5" y1="568.5" x2="724.5" y2="575.5" stroke="#c8c8c8" stroke-width="1"/>
<line x1="811.5" y1="568.5" x2="811.5" y2="575.5" stroke="#c8c8c8" stroke-width="1"/>
<line x1="888.5" y1="568.5" x2="888.5" y2="575.5" stroke="#c8c8c8" stroke-width="1"/>
<line x1="956.5" y1="568.5" x2="956.5" y2="575.5" stroke="#c8c8c8" stroke-width="1"/>
</g>
<g shape-rendering="crispEdges">
<polyline points="567.5,296.5 567.97,296.5 568.44,296.5 568.9,296.5 569.37,296.5 569.84,296.5 570.31,296.5 570.78,296.5 571.25,296.5 571.71,296.5 572.18,296.5 572.65,296.5 573.12,296.5 573.59,296.5 574.06,296.5 574.52,296.5 574.99,296.5 575.46,296.5 575.93,296.5 576.4,296.5 576.87,296.5 577.33,296.5 577.8,296.5 578.27,296.5 578.74,296.5 579.21,296.5 579.68,296.5 580.14,296.5 580.61,296.5 581.08,296.5 581.55,296.5 582.02,296.5 582.49,296.5 582.95,296.5 583.42,296.5 583.89,296.5 584.36,296.5 584.83,296.5 585.3,296.5 585.76,296.5 586.23,296.5 586.7,296.5 587.17,296.5 587.64,296.5 588.11,296.5 588.57,296.5 589.04,296.5 589.51,296.5 589.98,296.5 590.45,296.5 590.91,296.5 591.38,296.5 591.85,296.5 592.32,296.5 592.79,296.5 593.26,296.5 593.72,296.5 594.19,296.5 594.66,296.5 595.13,296.5 595.6,296.5 596.07,296.5 596.53,296.5 597,296.5 597.47,296.5 597.94,296.5 598.41,296.5 598.88,296.5 599.34,296.5 599.81,296.5 600.28,296.5 600.75,296.5 601.22,296.5 601.69,296.5 602.15,296.5 602.62,296.5 603.09,296.5 603.56,296.5 604.03,296.5 604.5,296.5 604.96,296.5 605.43,296.5 605.9,296.5 606.37,296.5 606.84,296.5 607.31,296.5 607.77,296.5 608.24,296.5 608.71,296.5 609.18,296.5 609.65,296.5 610.12,296.5 610.58,296.5 611.05,296.5 611.52,296.5 611.99,296.5 612.46,296.5 612.92,296.5 613.39,296.5 613.86,296.5 614.33,296.5 614.8,296.5 615.27,296.5 615.73,296.5 616.2,296.5 616.67,296.5 617.14,296.5 617.61,296.5 618.08,296.5 618.54,296.5 619.01,296.5 619.48,296.5 619.95,296.5 620.42,296.5 620.89,296.5 621.35,296.5 621.82,296.5 622.29,296.5 622.76,296.5 623.23,296.5 623.7,296.5 624.16,296.5 624.63,296.5 625.1,296.5 625.57,296.5 626.04,296.5 626.51,296.5 626.97,296.5 627.44,296.5 627.91,296.5 628.38,296.5 628.85,296.5 629.32,296.5 629.78,296.5 630.25,296.5 630.72,296.5 631.19,296.5 631.66,296.5 632.13,296.5 632.59,296.5 633.06,296.5 633.53,296.5 634,296.5 634.47,296.5 634.93,296.5 635.4,296.5 635.87,296.5 636.34,296.5 636.81,296.5 637.28,296.5 637.74,296.5 638.21,296.5 638.68,296.5 639.15,296.5 639.62,296.5 640.09,296.5 640.55,296.5 641.02,296.5 641.49,296.5 641.96,296.5 642.43,296.5 642.9,296.5 643.36,296.5 643.83,296.5 644.3,296.5 644.77,296.5 645.24,296.5 645.71,296.5 646.17,296.5 646.64,296.5 647.11,296.5 647.58,296.5 648.05,296.5 648.52,296.5 648.98,296.5 649.45,296.5 649.92,296.5 650.39,296.5 650.86,296.5 651.33,296.5 651.79,296.5 652.26,296.5 652.73,296.5 653.2,296.5 653.67,296.5 654.14,296.5 654.6,296.5 655.07,296.5 655.54,296.5 656.01,296.5 656.48,296.5 656.94,296.5 657.41,296.5 657.88,296.5 658.35,296.5 658.82,296.5 659.29,296.5 659.75,296.5 660.22,296.5 660.69,296.5 661.16,296.5 661.63,296.5 662.1,296.5 662.56,296.5 663.03,296.5 663.5,296.5 663.97,296.5 664.44,296.5 664.91,296.5 665.37,296.5 665.84,296.5 666.31,296.5 666.78,296.5 667.25,296.5 667.72,296.5 668.18,296.5 668.65,296.5 669.12,296.5 669.59,296.5 670.06,296.5 670.53,296.5 670.99,296.5 671.46,296.5 671.93,296.5 672.4,296.5 672.87,296.5 673.34,296.5 673.8,296.5 674.27,296.5 674.74,296.5 675.21,296.5 675.68,296.5 676.15,296.5 676.61,296.5 677.08,296.5 677.55,296.5 678.02,296.5 678.49,296.5 678.95,296.5 679.42,296.5 679.89,296.5 680.36,296.5 680.83,296.5 681.3,296.5 681.76,296.5 682.23,296.5 682.7,296.5 683.17,296.5 683.64,296.5 684.11,296.5 684.57,296.5 685.04,296.5 685.51,296.5 685.98,296.5 686.45,296.5 686.92,296.5 687.38,296.5 687.85,296.5 688.32,296.5 688.79,296.5 689.26,296.5 689.73,296.5 690.19,296.5 690.66,296.5 691.13,296.5 691.6,296.5 692.07,296.5 692.54,296.5 693,296.5 693.47,296.5 693.94,296.5 694.41,296.5 694.88,296.5 695.35,296.5 695.81,296.5 696.28,296.5 696.75,296.5 697.22,296.48 697.69,296.37 698.16,296.17 698.62,295.94 699.09,295.72 699.56,295.56 700.03,295.5 700.5,295.5 700.96,295.5 701.43,295.5 701.9,295.5 702.37,295.5 702.84,295.5 703.31,295.5 703.77,295.5 704.24,295.5 704.71,295.5 705.18,295.5 705.65,295.5 706.12,295.5 706.58,295.5 707.05,295.5 707.52,295.5 707.99,295.5 708.46,295.5 708.93,295.5 709.39,295.5 709.86,295.5 710.33,295.5 710.8,295.5 711.27,295.5 711.74,295.5 712.2,295.5 712.67,295.5 713.14,295.5 713.61,295.5 714.08,295.5 714.55,295.5 715.01,295.5 715.48,295.5 715.95,295.5 716.42,295.5 716.89,295.5 717.36,295.5 717.82,295.5 718.29,295.5 718.76,295.5 719.23,295.5 719.7,295.5 720.17,295.5 720.63,295.5 721.1,295.5 721.57,295.5 722.04,295.5 722.51,295.5 722.97,295.5 723.44,295.5 723.91,295.5 724.38,295.5 724.85,295.5 725.32,295.5 725.78,295.5 726.25,295.5 726.72,295.5 727.19,295.5 727.66,295.5 728.13,295.5 728.59,295.5 729.06,295.5 729.53,295.5 730,295.5 730.47,295.5 730.94,295.5 731.4,295.5 731.87,295.5 732.34,295.5 732.81,295.5 733.28,295.5 733.75,295.5 734.21,295.5 734.68,295.5 735.15,295.5 735.62,295.5 736.09,295.5 736.56,295.5 737.02,295.5 737.49,295.5 737.96,295.5 738.43,295.5 738.9,295.5 739.37,295.5 739.83,295.5 740.3,295.5 740.77,295.5 741.24,295.5 741.71,295.5 742.18,295.5 742.64,295.5 743.11,295.5 743.58,295.5 744.05,295.5 744.52,295.5 744.98,295.5 745.45,295.5 745.92,295.5 746.39,295.5 746.86,295.5 747.33,295.5 747.79,295.5 748.26,295.5 748.73,295.5 749.2,295.5 749.67,295.5 750.14,295.5 750.6,295.5 751.07,295.5 751.54,295.5 752.01,295.5 752.48,295.5 752.95,295.5 753.41,295.5 753.88,295.5 754.35,295.5 754.82,295.5 755.29,295.5 755.76,295.5 756.22,295.5 756.69,295.5 757.16,295.5 757.63,295.5 758.1,295.5 758.57,295.5 759.03,295.5 759.5,295.5 759.97,295.5 760.44,295.5 760.91,295.5 761.38,295.5 761.84,295.5 762.31,295.5 762.78,295.5 763.25,295.5 763.72,295.5 764.19,295.5 764.65,295.5 765.12,295.5 765.59,295.5 766.06,295.5 766.53,295.5 766.99,295.5 767.46,295.5 767.93,295.5 768.4,295.5 768.87,295.5 769.34,295.5 769.8,295.5 770.27,295.5 770.74,295.5 771.21,295.5 771.68,295.5 772.15,295.5 772.61,295.5 773.08,295.5 773.55,295.5 774.02,295.5 774.49,295.5 774.96,295.5 775.42,295.5 775.89,295.5 776.36,295.5 776.83,295.5 777.3,295.5 777.77,295.5 778.23,295.5 778.7,295.5 779.17,295.5 779.64,295.5 780.11,295.5 780.58,295.5 781.04,295.5 781.51,295.5 781.98,295.5 782.45,295.5 782.92,295.5 783.39,295.5 783.85,295.5 784.32,295.5 784.79,295.5 785.26,295.5 785.73,295.5 786.2,295.5 786.66,295.5 787.13,295.5 787.6,295.5 788.07,295.5 788.54,295.5 789.01,295.5 789.47,295.5 789.94,295.5 790.41,295.5 790.88,295.5 791.35,295.5 791.81,295.5 792.28,295.5 792.75,295.5 793.22,295.5 793.69,295.5 794.16,295.51 794.62,295.61 795.09,295.8 795.56,296.03 796.03,296.25 796.5,296.43 796.97,296.5 797.43,296.5 797.9,296.5 798.37,296.5 798.84,296.5 799.31,296.5 799.78,296.5 800.24,296.5 800.71,296.5 801.18,296.5 801.65,296.5 802.12,296.5 802.59,296.5 803.05,296.5 803.52,296.5 803.99,296.5 804.46,296.5 804.93,296.5 805.4,296.5 805.86,296.5 806.33,296.5 806.8,296.5 807.27,296.5 807.74,296.5 808.21,296.5 808.67,296.5 809.14,296.5 809.61,296.5 810.08,296.5 810.55,296.5 811.02,296.5 811.48,296.5 811.95,296.5 812.42,296.5 812.89,296.5 813.36,296.5 813.82,296.5 814.29,296.5 814.76,296.5 815.23,296.5 815.7,296.5 816.17,296.5 816.63,296.5 817.1,296.5 817.57,296.5 818.04,296.5 818.51,296.5 818.98,296.5 819.44,296.5 819.91,296.5 820.38,296.5 820.85,296.5 821.32,296.5 821.79,296.5 822.25,296.5 822.72,296.5 823.19,296.5 823.66,296.5 824.13,296.5 824.6,296.5 825.06,296.5 825.53,296.5 826,296.5 826.47,296.5 826.94,296.5 827.41,296.5 827.87,296.5 828.34,296.5 828.81,296.5 829.28,296.5 829.75,296.5 830.22,296.5 830.68,296.5 831.15,296.5 831.62,296.5 832.09,296.5 832.56,296.5 833.03,296.5 833.49,296.5 833.96,296.5 834.43,296.5 834.9,296.5 835.37,296.5 835.83,296.5 836.3,296.5 836.77,296.5 837.24,296.5 837.71,296.5 838.18,296.5 838.64,296.5 839.11,296.5 839.58,296.5 840.05,296.5 840.52,296.5 840.99,296.5 841.45,296.5 841.92,296.5 842.39,296.5 842.86,296.5 843.33,296.5 843.8,296.5 844.26,296.5 844.73,296.5 845.2,296.5 845.67,296.5 846.14,296.5 846.61,296.5 847.07,296.5 847.54,296.5 848.01,296.5 848.48,296.5 848.95,296.5 849.42,296.5 849.88,296.5 850.35,296.5 850.82,296.5 851.29,296.5 851.76,296.5 852.23,296.5 852.69,296.5 853.16,296.5 853.63,296.5 854.1,296.5 854.57,296.5 855.04,296.5 855.5,296.5 855.97,296.5 856.44,296.5 856.91,296.5 857.38,296.5 857.84,296.5 858.31,296.5 858.78,296.5 859.25,296.5 859.72,296.5 860.19,296.5 860.65,296.5 861.12,296.5 861.59,296.5 862.06,296.5 862.53,296.5 863,296.5 863.46,296.5 863.93,296.5 864.4,296.5 864.87,296.5 865.34,296.5 865.81,296.5 866.27,296.5 866.74,296.5 867.21,296.5 867.68,296.5 868.15,296.5 868.62,296.5 869.08,296.5 869.55,296.5 870.02,296.5 870.49,296.5 870.96,296.5 871.43,296.5 871.89,296.5 872.36,296.5 872.83,296.5 873.3,296.5 873.77,296.5 874.24,296.5 874.7,296.5 875.17,296.5 875.64,296.5 876.11,296.5 876.58,296.5 877.05,296.5 877.51,296.5 877.98,296.5 878.45,296.5 878.92,296.5 879.39,296.5 879.85,296.5 880.32,296.5 880.79,296.5 881.26,296.5 881.73,296.5 882.2,296.5 882.66,296.5 883.13,296.5 883.6,296.5 884.07,296.5 884.54,296.5 885.01,296.5 885.47,296.5 885.94,296.5 886.41,296.5 886.88,296.5 887.35,296.5 887.82,296.5 888.28,296.5 888.75,296.5 889.22,296.5 889.69,296.5 890.16,296.5 890.63,296.5 891.09,296.5 891.56,296.5 892.03,296.5 892.5,296.5 892.97,296.5 893.44,296.5 893.9,296.5 894.37,296.5 894.84,296.5 895.31,296.5 895.78,296.5 896.25,296.5 896.71,296.5 897.18,296.5 897.65,296.5 898.12,296.5 898.59,296.5 899.06,296.5 899.52,296.5 899.99,296.5 900.46,296.5 900.93,296.5 901.4,296.5 901.86,296.5 902.33,296.5 902.8,296.5 903.27,296.5 903.74,296.5 904.21,296.5 904.67,296.5 905.14,296.5 905.61,296.5 906.08,296.5 906.55,296.5 907.02,296.5 907.48,296.5 907.95,296.5 908.42,296.5 908.89,296.5 909.36,296.5 909.83,296.5 910.29,296.5 910.76,296.5 911.23,296.5 911.7,296.5 912.17,296.5 912.64,296.5 913.1,296.5 913.57,296.5 914.04,296.5 914.51,296.5 914.98,296.5 915.45,296.5 915.91,296.5 916.38,296.5 916.85,296.5 917.32,296.5 917.79,296.5 918.26,296.5 918.72,296.5 919.19,296.5 919.66,296.5 920.13,296.5 920.6,296.5 921.07,296.5 921.53,296.5 922,296.5 922.47,296.5 922.94,296.5 923.41,296.5 923.87,296.5 924.34,296.5 924.81,296.5 925.28,296.5 925.75,296.5 926.22,296.5 926.68,296.5 927.15,296.5 927.62,296.5 928.09,296.5 928.56,296.5 929.03,296.5 929.49,296.5 929.96,296.5 930.43,296.5 930.9,296.5 931.37,296.5 931.84,296.5 932.3,296.5 932.77,296.5 933.24,296.5 933.71,296.5 934.18,296.5 934.65,296.5 935.11,296.5 935.58,296.5 936.05,296.5 936.52,296.5 936.99,296.5 937.46,296.5 937.92,296.5 938.39,296.5 938.86,296.5 939.33,296.5 939.8,296.5 940.27,296.5 940.73,296.5 941.2,296.5 941.67,296.5 942.14,296.5 942.61,296.5 943.08,296.5 943.54,296.5 944.01,296.5 944.48,296.5 944.95,296.5 945.42,296.5 945.88,296.5 946.35,296.5 946.82,296.5 947.29,296.5 947.76,296.5 948.23,296.5 948.69,296.5 949.16,296.5 949.63,296.5 950.1,296.5 950.57,296.5 951.04,296.5 951.5,296.5 951.97,296.5 952.44,296.5 952.91,296.5 953.38,296.5 953.85,296.5 954.31,296.5 954.78,296.5 955.25,296.5 955.72,296.5 956.19,296.5 956.66,296.5 957.12,296.5 957.59,296.5 958.06,296.5 958.53,296.5 959,296.5 959.47,296.5 959.93,296.5 960.4,296.5 960.87,296.5 961.34,296.5 961.81,296.5 962.28,296.5 962.74,296.5 963.21,296.5 963.68,296.5 964.15,296.5 964.62,296.5 965.09,296.5 965.55,296.5 966.02,296.5 966.49,296.5 966.96,296.5 967.43,296.5 967.89,296.5 968.36,296.5 968.83,296.5 969.3,296.5 969.77,296.5 970.24,296.5 970.7,296.5 971.17,296.5 971.64,296.5 972.11,296.5 972.58,296.5 973.05,296.5 973.51,296.5 973.98,296.5 974.45,296.5 974.92,296.5 975.39,296.5 975.86,296.5 976.32,296.5 976.79,296.5 977.26,296.5 977.73,296.5 978.2,296.5 978.67,296.5 979.13,296.5 979.6,296.5 980.07,296.5 980.54,296.5 981.01,296.5 981.48,296.5 981.94,296.5 982.41,296.5 982.88,296.5 983.35,296.5 983.82,296.5 984.29,296.5 984.75,296.5 985.22,296.5 985.69,296.5 986.16,296.5 986.63,296.5 987.1,296.5 987.56,296.5 988.03,296.5 988.5,296.5" fill="none" stroke="#0000ff" stroke-width="1" stroke-linejoin="round"/>
<polyline points="567.5,296.5 567.97,296.5 568.44,296.5 568.9,296.5 569.37,296.5 569.84,296.5 570.31,296.5 570.78,296.5 571.25,296.5 571.71,296.5 572.18,296.5 572.65,296.5 573.12,296.5 573.59,296.5 574.06,296.5 574.52,296.5 574.99,296.5 575.46,296.5 575.93,296.5 576.4,296.5 576.87,296.5 577.33,296.5 577.8,296.5 578.27,296.5 578.74,296.5 579.21,296.5 579.68,296.5 580.14,296.5 580.61,296.5 581.08,296.5 581.55,296.5 582.02,296.5 582.49,296.5 582.95,296.5 583.42,296.5 583.89,296.5 584.36,296.5 584.83,296.5 585.3,296.5 585.76,296.5 586.23,296.5 586.7,296.5 587.17,296.5 587.64,296.5 588.11,296.5 588.57,296.5 589.04,296.5 589.51,296.5 589.98,296.5 590.45,296.5 590.91,296.5 591.38,296.5 591.85,296.5 592.32,296.5 592.79,296.5 593.26,296.5 593.72,296.5 594.19,296.5 594.66,296.5 595.13,296.5 595.6,296.5 596.07,296.5 596.53,296.5 597,296.5 597.47,296.5 597.94,296.5 598.41,296.5 598.88,296.5 599.34,296.5 599.81,296.5 600.28,296.5 600.75,296.5 601.22,296.5 601.69,296.5 602.15,296.5 602.62,296.5 603.09,296.5 603.56,296.5 604.03,296.5 604.5,296.5 604.96,296.5 605.43,296.5 605.9,296.5 606.37,296.5 606.84,296.5 607.31,296.5 607.77,296.5 608.24,296.5 608.71,296.5 609.18,296.5 609.65,296.5 610.12,296.5 610.58,296.5 611.05,296.5 611.52,296.5 611.99,296.5 612.46,296.5 612.92,296.5 613.39,296.5 613.86,296.5 614.33,296.5 614.8,296.5 615.27,296.5 615.73,296.5 616.2,296.5 616.67,296.5 617.14,296.5 617.61,296.5 618.08,296.5 618.54,296.5 619.01,296.5 619.48,296.5 619.95,296.5 620.42,296.5 620.89,296.5 621.35,296.5 621.82,296.5 622.29,296.5 622.76,296.5 623.23,296.5 623.7,296.5 624.16,296.5 624.63,296.5 625.1,296.5 625.57,296.5 626.04,296.5 626.51,296.5 626.97,296.5 627.44,296.5 627.91,296.5 628.38,296.5 628.85,296.5 629.32,296.5 629.78,296.5 630.25,296.5 630.72,296.5 631.19,296.5 631.66,296.5 632.13,296.5 632.59,296.5 633.06,296.5 633.53,296.5 634,296.5 634.47,296.5 634.93,296.5 635.4,296.5 635.87,296.5 636.34,296.5 636.81,296.5 637.28,296.5 637.74,296.5 638.21,296.5 638.68,296.5 639.15,296.5 639.62,296.5 640.09,296.5 640.55,296.5 641.02,296.5 641.49,296.5 641.96,296.5 642.43,296.5 642.9,296.5 643.36,296.5 643.83,296.5 644.3,296.5 644.77,296.5 645.24,296.5 645.71,296.5 646.17,296.5 646.64,296.5 647.11,296.5 647.58,296.5 648.05,296.5 648.52,296.5 648.98,296.5 649.45,296.5 649.92,296.5 650.39,296.5 650.86,296.5 651.33,296.5 651.79,296.5 652.26,296.5 652.73,296.5 653.2,296.5 653.67,296.5 654.14,296.5 654.6,296.5 655.07,296.5 655.54,296.5 656.01,296.5 656.48,296.5 656.94,296.5 657.41,296.5 657.88,296.5 658.35,296.5 658.82,296.5 659.29,296.5 659.75,296.5 660.22,296.5 660.69,296.5 661.16,296.5 661.63,296.5 662.1,296.5 662.56,296.5 663.03,296.5 663.5,296.5 663.97,296.5 664.44,296.5 664.91,296.5 665.37,296.5 665.84,296.5 666.31,296.5 666.78,296.5 667.25,296.5 667.72,296.5 668.18,296.5 668.65,296.5 669.12,296.5 669.59,296.5 670.06,296.5 670.53,296.5 670.99,296.5 671.46,296.5 671.93,296.5 672.4,296.5 672.87,296.5 673.34,296.5 673.8,296.5 674.27,296.5 674.74,296.5 675.21,296.5 675.68,296.5 676.15,296.5 676.61,296.5 677.08,296.5 677.55,296.5 678.02,296.5 678.49,296.5 678.95,296.5 679.42,296.5 679.89,296.5 680.36,296.5 680.83,296.5 681.3,296.5 681.76,296.5 682.23,296.5 682.7,296.5 683.17,296.5 683.64,296.5 684.11,296.5 684.57,296.5 685.04,296.5 685.51,296.5 685.98,296.5 686.45,296.5 686.92,296.5 687.38,296.5 687.85,296.5 688.32,296.5 688.79,296.5 689.26,296.5 689.73,296.5 690.19,296.5 690.66,296.5 691.13,296.5 691.6,296.5 692.07,296.5 692.54,296.5 693,296.5 693.47,296.5 693.94,296.5 694.41,296.5 694.88,296.5 695.35,296.5 695.81,296.5 696.28,296.5 696.75,296.5 697.22,296.48 697.69,296.37 698.16,296.17 698.62,295.94 699.09,295.72 699.56,295.56 700.03,295.5 700.5,295.5 700.96,295.5 701.43,295.5 701.9,295.5 702.37,295.5 702.84,295.5 703.31,295.5 703.77,295.5 704.24,295.5 704.71,295.5 705.18,295.5 705.65,295.5 706.12,295.5 706.58,295.5 707.05,295.5 707.52,295.5 707.99,295.5 708.46,295.5 708.93,295.5 709.39,295.45 709.86,295.3 710.33,295.08 710.8,294.85 711.27,294.65 711.74,294.52 712.2,294.5 712.67,294.5 713.14,294.5 713.61,294.5 714.08,294.5 714.55,294.5 715.01,294.5 715.48,294.5 715.95,294.5 716.42,294.5 716.89,294.5 717.36,294.5 717.82,294.5 718.29,294.5 718.76,294.5 719.23,294.5 719.7,294.5 720.17,294.5 720.63,294.5 721.1,294.5 721.57,294.5 722.04,294.5 722.51,294.5 722.97,294.5 723.44,294.5 723.91,294.5 724.38,294.5 724.85,294.5 725.32,294.5 725.78,294.5 726.25,294.5 726.72,294.5 727.19,294.5 727.66,294.5 728.13,294.5 728.59,294.5 729.06,294.5 729.53,294.5 730,294.5 730.47,294.5 730.94,294.5 731.4,294.55 731.87,294.7 732.34,294.92 732.81,295.15 733.28,295.35 733.75,295.48 734.21,295.5 734.68,295.5 735.15,295.5 735.62,295.5 736.09,295.5 736.56,295.5 737.02,295.5 737.49,295.5 737.96,295.5 738.43,295.5 738.9,295.5 739.37,295.5 739.83,295.5 740.3,295.5 740.77,295.5 741.24,295.5 741.71,295.5 742.18,295.5 742.64,295.5 743.11,295.5 743.58,295.5 744.05,295.5 744.52,295.5 744.98,295.5 745.45,295.5 745.92,295.5 746.39,295.5 746.86,295.5 747.33,295.5 747.79,295.5 748.26,295.5 748.73,295.5 749.2,295.5 749.67,295.5 750.14,295.5 750.6,295.5 751.07,295.5 751.54,295.5 752.01,295.5 752.48,295.5 752.95,295.5 753.41,295.5 753.88,295.5 754.35,295.5 754.82,295.5 755.29,295.5 755.76,295.5 756.22,295.5 756.69,295.5 757.16,295.5 757.63,295.5 758.1,295.5 758.57,295.5 759.03,295.5 759.5,295.5 759.97,295.5 760.44,295.5 760.91,295.5 761.38,295.5 761.84,295.5 762.31,295.5 762.78,295.5 763.25,295.5 763.72,295.5 764.19,295.5 764.65,295.5 765.12,295.5 765.59,295.5 766.06,295.5 766.53,295.5 766.99,295.5 767.46,295.5 767.93,295.5 768.4,295.5 768.87,295.5 769.34,295.5 769.8,295.5 770.27,295.5 770.74,295.5 771.21,295.5 771.68,295.5 772.15,295.5 772.61,295.5 773.08,295.5 773.55,295.5 774.02,295.5 774.49,295.5 774.96,295.5 775.42,295.5 775.89,295.5 776.36,295.5 776.83,295.5 777.3,295.5 777.77,295.5 778.23,295.5 778.7,295.5 779.17,295.5 779.64,295.5 780.11,295.5 780.58,295.6 781.04,295.78 781.51,296.01 781.98,296.23 782.45,296.41 782.92,296.5 783.39,296.5 783.85,296.5 784.32,296.5 784.79,296.5 785.26,296.5 785.73,296.5 786.2,296.5 786.66,296.5 787.13,296.5 787.6,296.5 788.07,296.5 788.54,296.5 789.01,296.5 789.47,296.5 789.94,296.5 790.41,296.5 790.88,296.5 791.35,296.5 791.81,296.5 792.28,296.5 792.75,296.5 793.22,296.5 793.69,296.5 794.16,296.5 794.62,296.5 795.09,296.5 795.56,296.5 796.03,296.5 796.5,296.5 796.97,296.5 797.43,296.5 797.9,296.5 798.37,296.5 798.84,296.5 799.31,296.5 799.78,296.5 800.24,296.5 800.71,296.5 801.18,296.5 801.65,296.5 802.12,296.5 802.59,296.5 803.05,296.5 803.52,296.5 803.99,296.5 804.46,296.5 804.93,296.5 805.4,296.5 805.86,296.5 806.33,296.5 806.8,296.5 807.27,296.5 807.74,296.5 808.21,296.5 808.67,296.5 809.14,296.5 809.61,296.5 810.08,296.5 810.55,296.5 811.02,296.5 811.48,296.5 811.95,296.5 812.42,296.5 812.89,296.5 813.36,296.5 813.82,296.5 814.29,296.5 814.76,296.5 815.23,296.5 815.7,296.5 816.17,296.5 816.63,296.5 817.1,296.5 817.57,296.5 818.04,296.5 818.51,296.5 818.98,296.5 819.44,296.5 819.91,296.5 820.38,296.5 820.85,296.5 821.32,296.5 821.79,296.5 822.25,296.5 822.72,296.5 823.19,296.5 823.66,296.5 824.13,296.5 824.6,296.5 825.06,296.5 825.53,296.5 826,296.5 826.47,296.5 826.94,296.5 827.41,296.5 827.87,296.5 828.34,296.5 828.81,296.5 829.28,296.5 829.75,296.5 830.22,296.5 830.68,296.5 831.15,296.5 831.62,296.5 832.09,296.5 832.56,296.5 833.03,296.5 833.49,296.5 833.96,296.5 834.43,296.5 834.9,296.5 835.37,296.5 835.83,296.5 836.3,296.5 836.77,296.5 837.24,296.5 837.71,296.5 838.18,296.5 838.64,296.5 839.11,296.5 839.58,296.5 840.05,296.5 840.52,296.5 840.99,296.5 841.45,296.5 841.92,296.5 842.39,296.5 842.86,296.5 843.33,296.5 843.8,296.5 844.26,296.5 844.73,296.5 845.2,296.5 845.67,296.5 846.14,296.5 846.61,296.5 847.07,296.5 847.54,296.5 848.01,296.5 848.48,296.5 848.95,296.5 849.42,296.5 849.88,296.5 850.35,296.5 850.82,296.5 851.29,296.5 851.76,296.5 852.23,296.5 852.69,296.5 853.16,296.5 853.63,296.5 854.1,296.5 854.57,296.5 855.04,296.5 855.5,296.5 855.97,296.5 856.44,296.5 856.91,296.5 857.38,296.5 857.84,296.5 858.31,296.5 858.78,296.5 859.25,296.5 859.72,296.5 860.19,296.5 860.65,296.5 861.12,296.5 861.59,296.5 862.06,296.5 862.53,296.5 863,296.5 863.46,296.5 863.93,296.5 864.4,296.5 864.87,296.5 865.34,296.5 865.81,296.5 866.27,296.5 866.74,296.5 867.21,296.5 867.68,296.5 868.15,296.5 868.62,296.5 869.08,296.5 869.55,296.5 870.02,296.5 870.49,296.5 870.96,296.5 871.43,296.5 871.89,296.5 872.36,296.5 872.83,296.5 873.3,296.5 873.77,296.5 874.24,296.5 874.7,296.5 875.17,296.5 875.64,296.5 876.11,296.5 876.58,296.5 877.05,296.5 877.51,296.5 877.98,296.5 878.45,296.5 878.92,296.5 879.39,296.5 879.85,296.5 880.32,296.5 880.79,296.5 881.26,296.5 881.73,296.5 882.2,296.5 882.66,296.5 883.13,296.5 883.6,296.5 884.07,296.5 884.54,296.5 885.01,296.5 885.47,296.5 885.94,296.5 886.41,296.5 886.88,296.5 887.35,296.5 887.82,296.5 888.28,296.5 888.75,296.5 889.22,296.5 889.69,296.5 890.16,296.5 890.63,296.5 891.09,296.5 891.56,296.5 892.03,296.5 892.5,296.5 892.97,296.5 893.44,296.5 893.9,296.5 894.37,296.5 894.84,296.5 895.31,296.5 895.78,296.5 896.25,296.5 896.71,296.5 897.18,296.5 897.65,296.5 898.12,296.5 898.59,296.5 899.06,296.5 899.52,296.5 899.99,296.5 900.46,296.5 900.93,296.5 901.4,296.5 901.86,296.5 902.33,296.5 902.8,296.5 903.27,296.5 903.74,296.5 904.21,296.5 904.67,296.5 905.14,296.5 905.61,296.5 906.08,296.5 906.55,296.5 907.02,296.5 907.48,296.5 907.95,296.5 908.42,296.5 908.89,296.5 909.36,296.5 909.83,296.5 910.29,296.5 910.76,296.5 911.23,296.5 911.7,296.5 912.17,296.5 912.64,296.5 913.1,296.5 913.57,296.5 914.04,296.5 914.51,296.5 914.98,296.5 915.45,296.5 915.91,296.5 916.38,296.5 916.85,296.5 917.32,296.5 917.79,296.5 918.26,296.5 918.72,296.5 919.19,296.5 919.66,296.5 920.13,296.5 920.6,296.5 921.07,296.5 921.53,296.5 922,296.5 922.47,296.5 922.94,296.5 923.41,296.5 923.87,296.5 924.34,296.5 924.81,296.5 925.28,296.5 925.75,296.5 926.22,296.5 926.68,296.5 927.15,296.5 927.62,296.5 928.09,296.5 928.56,296.5 929.03,296.5 929.49,296.5 929.96,296.5 930.43,296.5 930.9,296.5 931.37,296.5 931.84,296.5 932.3,296.5 932.77,296.5 933.24,296.5 933.71,296.5 934.18,296.5 934.65,296.5 935.11,296.5 935.58,296.5 936.05,296.5 936.52,296.5 936.99,296.5 937.46,296.5 937.92,296.5 938.39,296.5 938.86,296.5 939.33,296.5 939.8,296.5 940.27,296.5 940.73,296.5 941.2,296.5 941.67,296.5 942.14,296.5 942.61,296.5 943.08,296.5 943.54,296.5 944.01,296.5 944.48,296.5 944.95,296.5 945.42,296.5 945.88,296.5 946.35,296.5 946.82,296.5 947.29,296.5 947.76,296.5 948.23,296.5 948.69,296.5 949.16,296.5 949.63,296.5 950.1,296.5 950.57,296.5 951.04,296.5 951.5,296.5 951.97,296.5 952.44,296.5 952.91,296.5 953.38,296.5 953.85,296.5 954.31,296.5 954.78,296.5 955.25,296.5 955.72,296.5 956.19,296.5 956.66,296.5 957.12,296.5 957.59,296.5 958.06,296.5 958.53,296.5 959,296.5 959.47,296.5 959.93,296.5 960.4,296.5 960.87,296.5 961.34,296.5 961.81,296.5 962.28,296.5 962.74,296.5 963.21,296.5 963.68,296.5 964.15,296.5 964.62,296.5 965.09,296.5 965.55,296.5 966.02,296.5 966.49,296.5 966.96,296.5 967.43,296.5 967.89,296.5 968.36,296.5 968.83,296.5 969.3,296.5 969.77,296.5 970.24,296.5 970.7,296.5 971.17,296.5 971.64,296.5 972.11,296.5 972.58,296.5 973.05,296.5 973.51,296.5 973.98,296.5 974.45,296.5 974.92,296.5 975.39,296.5 975.86,296.5 976.32,296.5 976.79,296.5 977.26,296.5 977.73,296.5 978.2,296.5 978.67,296.5 979.13,296.5 979.6,296.5 980.07,296.5 980.54,296.5 981.01,296.5 981.48,296.5 981.94,296.5 982.41,296.5 982.88,296.5 983.35,296.5 983.82,296.5 984.29,296.5 984.75,296.5 985.22,296.5 985.69,296.5 986.16,296.5 986.63,296.5 987.1,296.5 987.56,296.5 988.03,296.5 988.5,296.5" fill="none" stroke="#0000ff" stroke-width="1" stroke-linejoin="round"/>
<polyline points="567.8,62.6 568.64,66.72 569.48,70.7 570.33,74.52 571.17,78.17 572.01,81.63 572.85,84.87 573.69,87.88 574.54,90.71 575.38,93.39 576.22,95.94 577.06,98.39 577.91,100.77 578.75,103.09 579.59,105.38 580.43,107.67 581.27,109.92 582.12,112.12 582.96,114.28 583.8,116.39 584.64,118.45 585.48,120.44 586.33,122.38 587.17,124.26 588.01,126.11 588.85,127.91 589.69,129.67 590.54,131.38 591.38,133.03 592.22,134.63 593.06,136.16 593.9,137.63 594.75,139.07 595.59,140.47 596.43,141.82 597.27,143.13 598.12,144.39 598.96,145.59 599.8,146.74 600.64,147.83 601.48,148.9 602.33,149.94 603.17,150.96 604.01,151.94 604.85,152.9 605.69,153.83 606.54,154.72 607.38,155.58 608.22,156.4 609.06,157.18 609.9,157.92 610.75,158.63 611.59,159.32 612.43,159.99 613.27,160.64 614.11,161.27 614.96,161.89 615.8,162.49 616.64,163.07 617.48,163.64 618.33,164.2 619.17,164.73 620.01,165.26 620.85,165.77 621.69,166.27 622.54,166.75 623.38,167.23 624.22,167.69 625.06,168.14 625.9,168.58 626.75,169.01 627.59,169.44 628.43,169.85 629.27,170.26 630.11,170.66 630.96,171.05 631.8,171.43 632.64,171.8 633.48,172.16 634.32,172.51 635.17,172.86 636.01,173.2 636.85,173.52 637.69,173.84 638.54,174.15 639.38,174.45 640.22,174.74 641.06,175.03 641.9,175.31 642.75,175.59 643.59,175.86 644.43,176.13 645.27,176.39 646.11,176.65 646.96,176.9 647.8,177.15 648.64,177.39 649.48,177.63 650.32,177.87 651.17,178.1 652.01,178.32 652.85,178.54 653.69,178.76 654.53,178.97 655.38,179.18 656.22,179.39 657.06,179.59 657.9,179.79 658.75,179.98 659.59,180.17 660.43,180.36 661.27,180.55 662.11,180.73 662.96,180.91 663.8,181.08 664.64,181.26 665.48,181.43 666.32,181.6 667.17,181.77 668.01,181.93 668.85,182.09 669.69,182.25 670.53,182.41 671.38,182.57 672.22,182.72 673.06,182.88 673.9,183.03 674.74,183.18 675.59,183.33 676.43,183.47 677.27,183.62 678.11,183.76 678.96,183.91 679.8,184.05 680.64,184.19 681.48,184.33 682.32,184.47 683.17,184.61 684.01,184.75 684.85,184.89 685.69,185.02 686.53,185.16 687.38,185.29 688.22,185.43 689.06,185.57 689.9,185.7 690.74,185.84 691.59,185.97 692.43,186.11 693.27,186.24 694.11,186.38 694.95,186.51 695.8,186.65 696.64,186.78 697.48,186.91 698.32,187.04 699.17,187.17 700.01,187.3 700.85,187.43 701.69,187.55 702.53,187.68 703.38,187.81 704.22,187.93 705.06,188.06 705.9,188.18 706.74,188.3 707.59,188.43 708.43,188.55 709.27,188.67 710.11,188.79 710.95,188.91 711.8,189.03 712.64,189.15 713.48,189.27 714.32,189.39 715.16,189.51 716.01,189.63 716.85,189.74 717.69,189.86 718.53,189.98 719.38,190.09 720.22,190.21 721.06,190.33 721.9,190.44 722.74,190.56 723.59,190.67 724.43,190.79 725.27,190.91 726.11,191.02 726.95,191.14 727.8,191.25 728.64,191.37 729.48,191.48 730.32,191.6 731.16,191.72 732.01,191.83 732.85,191.95 733.69,192.06 734.53,192.18 735.37,192.29 736.22,192.41 737.06,192.52 737.9,192.64 738.74,192.75 739.59,192.86 740.43,192.97 741.27,193.09 742.11,193.2 742.95,193.31 743.8,193.42 744.64,193.53 745.48,193.64 746.32,193.74 747.16,193.85 748.01,193.96 748.85,194.06 749.69,194.17 750.53,194.27 751.37,194.38 752.22,194.48 753.06,194.58 753.9,194.68 754.74,194.78 755.58,194.87 756.43,194.97 757.27,195.07 758.11,195.16 758.95,195.25 759.8,195.34 760.64,195.43 761.48,195.52 762.32,195.61 763.16,195.7 764.01,195.79 764.85,195.88 765.69,195.97 766.53,196.06 767.37,196.14 768.22,196.23 769.06,196.31 769.9,196.39 770.74,196.47 771.58,196.55 772.43,196.63 773.27,196.71 774.11,196.78 774.95,196.86 775.79,196.93 776.64,197 777.48,197.06 778.32,197.13 779.16,197.19 780.01,197.25 780.85,197.31 781.69,197.38 782.53,197.44 783.37,197.51 784.22,197.58 785.06,197.64 785.9,197.71 786.74,197.77 787.58,197.84 788.43,197.9 789.27,197.96 790.11,198.02 790.95,198.07 791.79,198.13 792.64,198.17 793.48,198.22 794.32,198.26 795.16,198.3 796,198.33 796.85,198.35 797.69,198.38 798.53,198.39 799.37,198.4 800.22,198.4 801.06,198.4 801.9,198.4 802.74,198.39 803.58,198.39 804.43,198.38 805.27,198.37 806.11,198.37 806.95,198.36 807.79,198.35 808.64,198.34 809.48,198.33 810.32,198.32 811.16,198.3 812,198.29 812.85,198.27 813.69,198.25 814.53,198.22 815.37,198.19 816.21,198.15 817.06,198.11 817.9,198.06 818.74,198.01 819.58,197.96 820.43,197.9 821.27,197.84 822.11,197.78 822.95,197.71 823.79,197.64 824.64,197.57 825.48,197.49 826.32,197.41 827.16,197.34 828,197.26 828.85,197.17 829.69,197.09 830.53,197.01 831.37,196.92 832.21,196.84 833.06,196.75 833.9,196.66 834.74,196.58 835.58,196.49 836.42,196.41 837.27,196.32 838.11,196.23 838.95,196.13 839.79,196.04 840.64,195.93 841.48,195.83 842.32,195.72 843.16,195.6 844,195.49 844.85,195.37 845.69,195.24 846.53,195.12 847.37,194.99 848.21,194.86 849.06,194.73 849.9,194.6 850.74,194.46 851.58,194.33 852.42,194.19 853.27,194.05 854.11,193.91 854.95,193.77 855.79,193.62 856.63,193.48 857.48,193.34 858.32,193.19 859.16,193.05 860,192.91 860.85,192.76 861.69,192.62 862.53,192.48 863.37,192.34 864.21,192.2 865.06,192.05 865.9,191.91 866.74,191.76 867.58,191.62 868.42,191.47 869.27,191.32 870.11,191.18 870.95,191.03 871.79,190.87 872.63,190.72 873.48,190.57 874.32,190.41 875.16,190.26 876,190.1 876.84,189.94 877.69,189.78 878.53,189.62 879.37,189.46 880.21,189.29 881.06,189.13 881.9,188.96 882.74,188.79 883.58,188.62 884.42,188.45 885.27,188.28 886.11,188.1 886.95,187.92 887.79,187.74 888.63,187.56 889.48,187.38 890.32,187.2 891.16,187.01 892,186.83 892.84,186.64 893.69,186.45 894.53,186.26 895.37,186.06 896.21,185.87 897.05,185.67 897.9,185.47 898.74,185.28 899.58,185.07 900.42,184.87 901.27,184.67 902.11,184.46 902.95,184.25 903.79,184.04 904.63,183.83 905.48,183.62 906.32,183.4 907.16,183.18 908,182.97 908.84,182.75 909.69,182.52 910.53,182.3 911.37,182.07 912.21,181.85 913.05,181.62 913.9,181.39 914.74,181.15 915.58,180.92 916.42,180.68 917.26,180.44 918.11,180.2 918.95,179.96 919.79,179.72 920.63,179.47 921.48,179.22 922.32,178.97 923.16,178.72 924,178.46 924.84,178.21 925.69,177.95 926.53,177.69 927.37,177.42 928.21,177.16 929.05,176.89 929.9,176.62 930.74,176.35 931.58,176.07 932.42,175.8 933.26,175.52 934.11,175.24 934.95,174.95 935.79,174.67 936.63,174.38 937.47,174.09 938.32,173.8 939.16,173.5 940,173.21 940.84,172.91 941.69,172.6 942.53,172.3 943.37,171.99 944.21,171.68 945.05,171.37 945.9,171.06 946.74,170.74 947.58,170.42 948.42,170.1 949.26,169.78 950.11,169.45 950.95,169.12 951.79,168.79 952.63,168.46 953.47,168.12 954.32,167.78 955.16,167.44 956,167.1 956.84,166.75 957.68,166.4 958.53,166.04 959.37,165.68 960.21,165.32 961.05,164.95 961.9,164.58 962.74,164.2 963.58,163.82 964.42,163.44 965.26,163.05 966.11,162.66 966.95,162.26 967.79,161.86 968.63,161.46 969.47,161.05 970.32,160.64 971.16,160.23 972,159.81 972.84,159.39 973.68,158.96 974.53,158.54 975.37,158.11 976.21,157.67 977.05,157.23 977.89,156.79 978.74,156.35 979.58,155.91 980.42,155.46 981.26,155.01 982.11,154.55 982.95,154.1 983.79,153.64 984.63,153.17 985.47,152.71 986.32,152.24 987.16,151.77 988,151.3" fill="none" stroke="#ff0000" stroke-width="1.15" stroke-linejoin="round"/>
<polyline points="567.8,62.6 568.64,67.82 569.48,72.88 570.33,77.75 571.17,82.43 572.01,86.88 572.85,91.08 573.69,95.02 574.54,98.78 575.38,102.38 576.22,105.83 577.06,109.14 577.91,112.33 578.75,115.41 579.59,118.38 580.43,121.27 581.27,124.06 582.12,126.77 582.96,129.4 583.8,131.93 584.64,134.37 585.48,136.73 586.33,138.98 587.17,141.15 588.01,143.22 588.85,145.22 589.69,147.14 590.54,149.01 591.38,150.84 592.22,152.63 593.06,154.41 593.9,156.18 594.75,157.93 595.59,159.65 596.43,161.35 597.27,163 598.12,164.61 598.96,166.16 599.8,167.65 600.64,169.1 601.48,170.52 602.33,171.93 603.17,173.31 604.01,174.67 604.85,175.99 605.69,177.27 606.54,178.51 607.38,179.69 608.22,180.82 609.06,181.89 609.9,182.89 610.75,183.84 611.59,184.76 612.43,185.65 613.27,186.52 614.11,187.37 614.96,188.19 615.8,188.99 616.64,189.76 617.48,190.51 618.33,191.24 619.17,191.95 620.01,192.64 620.85,193.31 621.69,193.96 622.54,194.59 623.38,195.2 624.22,195.8 625.06,196.38 625.9,196.95 626.75,197.5 627.59,198.05 628.43,198.58 629.27,199.11 630.11,199.62 630.96,200.12 631.8,200.61 632.64,201.08 633.48,201.54 634.32,201.98 635.17,202.41 636.01,202.83 636.85,203.23 637.69,203.61 638.54,203.98 639.38,204.33 640.22,204.67 641.06,204.99 641.9,205.31 642.75,205.63 643.59,205.93 644.43,206.23 645.27,206.52 646.11,206.81 646.96,207.09 647.8,207.36 648.64,207.63 649.48,207.89 650.32,208.14 651.17,208.39 652.01,208.63 652.85,208.86 653.69,209.09 654.53,209.31 655.38,209.52 656.22,209.72 657.06,209.92 657.9,210.11 658.75,210.3 659.59,210.48 660.43,210.65 661.27,210.82 662.11,210.98 662.96,211.15 663.8,211.3 664.64,211.46 665.48,211.61 666.32,211.76 667.17,211.91 668.01,212.05 668.85,212.19 669.69,212.33 670.53,212.47 671.38,212.6 672.22,212.73 673.06,212.86 673.9,212.99 674.74,213.11 675.59,213.24 676.43,213.36 677.27,213.48 678.11,213.59 678.96,213.71 679.8,213.82 680.64,213.94 681.48,214.05 682.32,214.16 683.17,214.27 684.01,214.38 684.85,214.49 685.69,214.59 686.53,214.7 687.38,214.8 688.22,214.91 689.06,215.01 689.9,215.12 690.74,215.22 691.59,215.33 692.43,215.43 693.27,215.53 694.11,215.64 694.95,215.74 695.8,215.84 696.64,215.94 697.48,216.03 698.32,216.13 699.17,216.22 700.01,216.32 700.85,216.41 701.69,216.5 702.53,216.59 703.38,216.69 704.22,216.77 705.06,216.86 705.9,216.95 706.74,217.04 707.59,217.12 708.43,217.21 709.27,217.3 710.11,217.38 710.95,217.47 711.8,217.55 712.64,217.63 713.48,217.72 714.32,217.8 715.16,217.88 716.01,217.97 716.85,218.05 717.69,218.13 718.53,218.21 719.38,218.29 720.22,218.38 721.06,218.46 721.9,218.54 722.74,218.63 723.59,218.71 724.43,218.79 725.27,218.88 726.11,218.96 726.95,219.05 727.8,219.13 728.64,219.22 729.48,219.3 730.32,219.39 731.16,219.47 732.01,219.56 732.85,219.64 733.69,219.73 734.53,219.81 735.37,219.9 736.22,219.98 737.06,220.07 737.9,220.15 738.74,220.24 739.59,220.32 740.43,220.4 741.27,220.49 742.11,220.57 742.95,220.65 743.8,220.73 744.64,220.81 745.48,220.89 746.32,220.97 747.16,221.05 748.01,221.13 748.85,221.21 749.69,221.29 750.53,221.36 751.37,221.44 752.22,221.51 753.06,221.58 753.9,221.66 754.74,221.73 755.58,221.8 756.43,221.87 757.27,221.93 758.11,222 758.95,222.07 759.8,222.13 760.64,222.2 761.48,222.27 762.32,222.34 763.16,222.41 764.01,222.48 764.85,222.56 765.69,222.63 766.53,222.7 767.37,222.78 768.22,222.85 769.06,222.92 769.9,222.98 770.74,223.04 771.58,223.1 772.43,223.16 773.27,223.21 774.11,223.26 774.95,223.3 775.79,223.33 776.64,223.36 777.48,223.38 778.32,223.39 779.16,223.4 780.01,223.4 780.85,223.4 781.69,223.4 782.53,223.4 783.37,223.4 784.22,223.4 785.06,223.4 785.9,223.4 786.74,223.4 787.58,223.4 788.43,223.4 789.27,223.4 790.11,223.4 790.95,223.4 791.79,223.4 792.64,223.4 793.48,223.4 794.32,223.4 795.16,223.4 796,223.4 796.85,223.4 797.69,223.4 798.53,223.4 799.37,223.4 800.22,223.4 801.06,223.4 801.9,223.4 802.74,223.4 803.58,223.4 804.43,223.37 805.27,223.33 806.11,223.28 806.95,223.22 807.79,223.15 808.64,223.07 809.48,222.99 810.32,222.91 811.16,222.83 812,222.76 812.85,222.68 813.69,222.6 814.53,222.52 815.37,222.43 816.21,222.35 817.06,222.26 817.9,222.16 818.74,222.07 819.58,221.97 820.43,221.87 821.27,221.77 822.11,221.67 822.95,221.56 823.79,221.45 824.64,221.34 825.48,221.23 826.32,221.12 827.16,221 828,220.88 828.85,220.76 829.69,220.64 830.53,220.52 831.37,220.39 832.21,220.26 833.06,220.14 833.9,220.01 834.74,219.88 835.58,219.75 836.42,219.61 837.27,219.48 838.11,219.34 838.95,219.2 839.79,219.05 840.64,218.9 841.48,218.75 842.32,218.6 843.16,218.44 844,218.28 844.85,218.11 845.69,217.95 846.53,217.78 847.37,217.6 848.21,217.43 849.06,217.25 849.9,217.07 850.74,216.89 851.58,216.71 852.42,216.52 853.27,216.33 854.11,216.14 854.95,215.95 855.79,215.75 856.63,215.55 857.48,215.35 858.32,215.15 859.16,214.95 860,214.74 860.85,214.54 861.69,214.33 862.53,214.12 863.37,213.91 864.21,213.69 865.06,213.47 865.9,213.25 866.74,213.02 867.58,212.79 868.42,212.56 869.27,212.32 870.11,212.08 870.95,211.84 871.79,211.59 872.63,211.34 873.48,211.09 874.32,210.84 875.16,210.58 876,210.31 876.84,210.05 877.69,209.78 878.53,209.51 879.37,209.24 880.21,208.96 881.06,208.69 881.9,208.4 882.74,208.12 883.58,207.84 884.42,207.55 885.27,207.26 886.11,206.96 886.95,206.67 887.79,206.37 888.63,206.07 889.48,205.77 890.32,205.46 891.16,205.15 892,204.84 892.84,204.52 893.69,204.2 894.53,203.87 895.37,203.54 896.21,203.21 897.05,202.87 897.9,202.53 898.74,202.19 899.58,201.85 900.42,201.5 901.27,201.15 902.11,200.79 902.95,200.44 903.79,200.08 904.63,199.72 905.48,199.35 906.32,198.98 907.16,198.62 908,198.24 908.84,197.87 909.69,197.5 910.53,197.12 911.37,196.74 912.21,196.36 913.05,195.98 913.9,195.59 914.74,195.21 915.58,194.82 916.42,194.43 917.26,194.04 918.11,193.65 918.95,193.26 919.79,192.86 920.63,192.47 921.48,192.06 922.32,191.66 923.16,191.25 924,190.84 924.84,190.42 925.69,190 926.53,189.57 927.37,189.14 928.21,188.71 929.05,188.28 929.9,187.84 930.74,187.4 931.58,186.96 932.42,186.52 933.26,186.07 934.11,185.62 934.95,185.17 935.79,184.72 936.63,184.27 937.47,183.81 938.32,183.36 939.16,182.9 940,182.44 940.84,181.99 941.69,181.53 942.53,181.07 943.37,180.61 944.21,180.15 945.05,179.69 945.9,179.23 946.74,178.77 947.58,178.31 948.42,177.86 949.26,177.4 950.11,176.95 950.95,176.49 951.79,176.04 952.63,175.59 953.47,175.14 954.32,174.69 955.16,174.24 956,173.8 956.84,173.36 957.68,172.91 958.53,172.47 959.37,172.03 960.21,171.59 961.05,171.14 961.9,170.7 962.74,170.26 963.58,169.82 964.42,169.38 965.26,168.93 966.11,168.49 966.95,168.05 967.79,167.61 968.63,167.16 969.47,166.72 970.32,166.28 971.16,165.84 972,165.4 972.84,164.95 973.68,164.51 974.53,164.07 975.37,163.63 976.21,163.19 977.05,162.74 977.89,162.3 978.74,161.86 979.58,161.42 980.42,160.98 981.26,160.53 982.11,160.09 982.95,159.65 983.79,159.21 984.63,158.77 985.47,158.33 986.32,157.88 987.16,157.44 988,157" fill="none" stroke="#ff0000" stroke-width="1.15" stroke-linejoin="round"/>
<polyline points="567.5,363.5 568.34,363.5 569.19,363.5 570.03,363.5 570.87,363.5 571.71,363.5 572.56,363.5 573.4,363.5 574.24,363.5 575.08,363.5 575.93,363.5 576.77,363.5 577.61,363.5 578.45,363.5 579.3,363.5 580.14,363.5 580.98,363.5 581.83,363.5 582.67,363.5 583.51,363.5 584.35,363.5 585.2,363.5 586.04,363.5 586.88,363.5 587.72,363.5 588.57,363.5 589.41,363.5 590.25,363.5 591.1,363.5 591.94,363.5 592.78,363.5 593.62,363.5 594.47,363.5 595.31,363.5 596.15,363.5 596.99,363.5 597.84,363.5 598.68,363.5 599.52,363.5 600.36,363.5 601.21,363.5 602.05,363.5 602.89,363.5 603.74,363.5 604.58,363.5 605.42,363.5 606.26,363.5 607.11,363.5 607.95,363.5 608.79,363.5 609.63,363.5 610.48,363.5 611.32,363.5 612.16,363.5 613.01,363.5 613.85,363.5 614.69,363.5 615.53,363.5 616.38,363.5 617.22,363.5 618.06,363.5 618.9,363.5 619.75,363.5 620.59,363.5 621.43,363.5 622.27,363.5 623.12,363.5 623.96,363.5 624.8,363.5 625.65,363.5 626.49,363.5 627.33,363.5 628.17,363.5 629.02,363.5 629.86,363.5 630.7,363.5 631.54,363.5 632.39,363.5 633.23,363.5 634.07,363.5 634.91,363.5 635.76,363.5 636.6,363.5 637.44,363.5 638.29,363.5 639.13,363.5 639.97,363.5 640.81,363.5 641.66,363.5 642.5,363.5 643.34,363.5 644.18,363.5 645.03,363.5 645.87,363.5 646.71,363.5 647.56,363.5 648.4,363.5 649.24,363.5 650.08,363.5 650.93,363.5 651.77,363.5 652.61,363.5 653.45,363.5 654.3,363.5 655.14,363.5 655.98,363.5 656.82,363.5 657.67,363.5 658.51,363.5 659.35,363.5 660.2,363.5 661.04,363.5 661.88,363.5 662.72,363.5 663.57,363.5 664.41,363.5 665.25,363.5 666.09,363.5 666.94,363.5 667.78,363.5 668.62,363.5 669.46,363.5 670.31,363.5 671.15,363.5 671.99,363.5 672.84,363.5 673.68,363.5 674.52,363.5 675.36,363.5 676.21,363.5 677.05,363.5 677.89,363.5 678.73,363.5 679.58,363.5 680.42,363.5 681.26,363.5 682.11,363.5 682.95,363.5 683.79,363.5 684.63,363.5 685.48,363.5 686.32,363.5 687.16,363.5 688,363.5 688.85,363.5 689.69,363.5 690.53,363.5 691.37,363.5 692.22,363.5 693.06,363.5 693.9,363.5 694.75,363.5 695.59,363.5 696.43,363.51 697.27,363.57 698.12,363.65 698.96,363.76 699.8,363.89 700.64,364.03 701.49,364.19 702.33,364.36 703.17,364.53 704.02,364.71 704.86,364.93 705.7,365.18 706.54,365.46 707.39,365.77 708.23,366.09 709.07,366.43 709.91,366.78 710.76,367.13 711.6,367.48 712.44,367.87 713.28,368.3 714.13,368.76 714.97,369.23 715.81,369.7 716.66,370.16 717.5,370.58 718.34,370.97 719.18,371.29 720.03,371.6 720.87,371.92 721.71,372.21 722.55,372.44 723.4,372.58 724.24,372.59 725.08,372.46 725.92,372.22 726.77,371.9 727.61,371.53 728.45,371.16 729.3,370.81 730.14,370.52 730.98,370.26 731.82,369.98 732.67,369.69 733.51,369.41 734.35,369.14 735.19,368.9 736.04,368.71 736.88,368.57 737.72,368.5 738.57,368.5 739.41,368.52 740.25,368.54 741.09,368.58 741.94,368.62 742.78,368.66 743.62,368.71 744.46,368.76 745.31,368.81 746.15,368.86 746.99,368.9 747.83,368.94 748.68,368.97 749.52,368.99 750.36,369 751.21,369 752.05,369 752.89,369 753.73,369 754.58,369 755.42,369 756.26,369 757.1,369 757.95,369 758.79,369 759.63,369 760.47,369 761.32,369 762.16,369 763,369 763.85,369 764.69,369 765.53,368.99 766.37,368.95 767.22,368.89 768.06,368.81 768.9,368.71 769.74,368.6 770.59,368.47 771.43,368.34 772.27,368.2 773.12,368.06 773.96,367.92 774.8,367.77 775.64,367.57 776.49,367.34 777.33,367.09 778.17,366.83 779.01,366.57 779.86,366.32 780.7,366.09 781.54,365.89 782.38,365.73 783.23,365.58 784.07,365.44 784.91,365.31 785.76,365.18 786.6,365.06 787.44,364.95 788.28,364.84 789.13,364.73 789.97,364.63 790.81,364.54 791.65,364.44 792.5,364.35 793.34,364.26 794.18,364.17 795.03,364.07 795.87,363.98 796.71,363.88 797.55,363.79 798.4,363.71 799.24,363.64 800.08,363.58 800.92,363.53 801.77,363.51 802.61,363.5 803.45,363.5 804.29,363.5 805.14,363.5 805.98,363.5 806.82,363.5 807.67,363.5 808.51,363.5 809.35,363.5 810.19,363.5 811.04,363.5 811.88,363.5 812.72,363.5 813.56,363.5 814.41,363.5 815.25,363.5 816.09,363.5 816.93,363.5 817.78,363.5 818.62,363.5 819.46,363.5 820.31,363.5 821.15,363.5 821.99,363.5 822.83,363.5 823.68,363.5 824.52,363.5 825.36,363.5 826.2,363.5 827.05,363.5 827.89,363.5 828.73,363.5 829.58,363.5 830.42,363.5 831.26,363.5 832.1,363.5 832.95,363.5 833.79,363.5 834.63,363.5 835.47,363.5 836.32,363.5 837.16,363.5 838,363.5 838.84,363.5 839.69,363.5 840.53,363.5 841.37,363.5 842.22,363.5 843.06,363.5 843.9,363.5 844.74,363.5 845.59,363.5 846.43,363.5 847.27,363.5 848.11,363.5 848.96,363.5 849.8,363.5 850.64,363.5 851.48,363.5 852.33,363.5 853.17,363.5 854.01,363.5 854.86,363.5 855.7,363.5 856.54,363.5 857.38,363.5 858.23,363.5 859.07,363.5 859.91,363.5 860.75,363.5 861.6,363.5 862.44,363.5 863.28,363.5 864.13,363.5 864.97,363.5 865.81,363.5 866.65,363.5 867.5,363.5 868.34,363.5 869.18,363.5 870.02,363.5 870.87,363.5 871.71,363.5 872.55,363.5 873.39,363.5 874.24,363.5 875.08,363.5 875.92,363.5 876.77,363.5 877.61,363.5 878.45,363.5 879.29,363.5 880.14,363.5 880.98,363.5 881.82,363.5 882.66,363.5 883.51,363.5 884.35,363.5 885.19,363.5 886.04,363.5 886.88,363.5 887.72,363.5 888.56,363.5 889.41,363.5 890.25,363.5 891.09,363.5 891.93,363.5 892.78,363.5 893.62,363.5 894.46,363.5 895.3,363.5 896.15,363.5 896.99,363.5 897.83,363.5 898.68,363.5 899.52,363.5 900.36,363.5 901.2,363.5 902.05,363.5 902.89,363.5 903.73,363.5 904.57,363.5 905.42,363.5 906.26,363.5 907.1,363.5 907.94,363.5 908.79,363.5 909.63,363.5 910.47,363.5 911.32,363.5 912.16,363.5 913,363.5 913.84,363.5 914.69,363.5 915.53,363.5 916.37,363.5 917.21,363.5 918.06,363.5 918.9,363.5 919.74,363.5 920.59,363.5 921.43,363.5 922.27,363.5 923.11,363.5 923.96,363.5 924.8,363.5 925.64,363.5 926.48,363.5 927.33,363.5 928.17,363.5 929.01,363.5 929.85,363.5 930.7,363.5 931.54,363.5 932.38,363.5 933.23,363.5 934.07,363.5 934.91,363.5 935.75,363.5 936.6,363.5 937.44,363.5 938.28,363.5 939.12,363.5 939.97,363.5 940.81,363.5 941.65,363.5 942.49,363.5 943.34,363.5 944.18,363.5 945.02,363.5 945.87,363.5 946.71,363.5 947.55,363.5 948.39,363.5 949.24,363.5 950.08,363.5 950.92,363.5 951.76,363.5 952.61,363.5 953.45,363.5 954.29,363.5 955.14,363.5 955.98,363.5 956.82,363.5 957.66,363.5 958.51,363.5 959.35,363.5 960.19,363.5 961.03,363.5 961.88,363.5 962.72,363.5 963.56,363.5 964.4,363.5 965.25,363.5 966.09,363.5 966.93,363.5 967.78,363.5 968.62,363.5 969.46,363.5 970.3,363.5 971.15,363.5 971.99,363.5 972.83,363.5 973.67,363.5 974.52,363.5 975.36,363.5 976.2,363.5 977.05,363.5 977.89,363.5 978.73,363.5 979.57,363.5 980.42,363.5 981.26,363.5 982.1,363.5 982.94,363.5 983.79,363.5 984.63,363.5 985.47,363.5 986.31,363.5 987.16,363.5 988,363.5" fill="none" stroke="#00ff00" stroke-width="1.2" stroke-linejoin="round"/>
<polyline points="567.5,363.5 568.34,363.5 569.19,363.5 570.03,363.5 570.87,363.5 571.71,363.5 572.56,363.5 573.4,363.5 574.24,363.5 575.08,363.5 575.93,363.5 576.77,363.5 577.61,363.5 578.45,363.5 579.3,363.5 580.14,363.5 580.98,363.5 581.83,363.5 582.67,363.5 583.51,363.5 584.35,363.5 585.2,363.5 586.04,363.5 586.88,363.5 587.72,363.5 588.57,363.5 589.41,363.5 590.25,363.5 591.1,363.5 591.94,363.5 592.78,363.5 593.62,363.5 594.47,363.5 595.31,363.5 596.15,363.5 596.99,363.5 597.84,363.5 598.68,363.5 599.52,363.5 600.36,363.5 601.21,363.5 602.05,363.5 602.89,363.5 603.74,363.5 604.58,363.5 605.42,363.5 606.26,363.5 607.11,363.5 607.95,363.5 608.79,363.5 609.63,363.5 610.48,363.5 611.32,363.5 612.16,363.5 613.01,363.5 613.85,363.5 614.69,363.5 615.53,363.5 616.38,363.5 617.22,363.5 618.06,363.5 618.9,363.5 619.75,363.5 620.59,363.5 621.43,363.5 622.27,363.5 623.12,363.5 623.96,363.5 624.8,363.5 625.65,363.5 626.49,363.5 627.33,363.5 628.17,363.5 629.02,363.5 629.86,363.5 630.7,363.5 631.54,363.5 632.39,363.5 633.23,363.5 634.07,363.5 634.91,363.5 635.76,363.5 636.6,363.5 637.44,363.5 638.29,363.5 639.13,363.5 639.97,363.5 640.81,363.5 641.66,363.5 642.5,363.5 643.34,363.5 644.18,363.5 645.03,363.5 645.87,363.5 646.71,363.5 647.56,363.5 648.4,363.5 649.24,363.5 650.08,363.5 650.93,363.5 651.77,363.5 652.61,363.5 653.45,363.5 654.3,363.5 655.14,363.5 655.98,363.5 656.82,363.5 657.67,363.5 658.51,363.5 659.35,363.5 660.2,363.5 661.04,363.5 661.88,363.5 662.72,363.5 663.57,363.5 664.41,363.5 665.25,363.5 666.09,363.5 666.94,363.5 667.78,363.5 668.62,363.5 669.46,363.5 670.31,363.5 671.15,363.5 671.99,363.5 672.84,363.5 673.68,363.5 674.52,363.5 675.36,363.5 676.21,363.5 677.05,363.5 677.89,363.5 678.73,363.5 679.58,363.5 680.42,363.5 681.26,363.5 682.11,363.5 682.95,363.5 683.79,363.5 684.63,363.5 685.48,363.5 686.32,363.5 687.16,363.5 688,363.5 688.85,363.5 689.69,363.5 690.53,363.5 691.37,363.5 692.22,363.5 693.06,363.5 693.9,363.5 694.75,363.5 695.59,363.5 696.43,363.52 697.27,363.61 698.12,363.74 698.96,363.91 699.8,364.12 700.64,364.35 701.49,364.6 702.33,364.85 703.17,365.1 704.02,365.36 704.86,365.65 705.7,365.97 706.54,366.32 707.39,366.69 708.23,367.08 709.07,367.49 709.91,367.89 710.76,368.3 711.6,368.69 712.44,369.12 713.28,369.59 714.13,370.07 714.97,370.56 715.81,371.04 716.66,371.5 717.5,371.92 718.34,372.29 719.18,372.59 720.03,372.86 720.87,373.13 721.71,373.38 722.55,373.57 723.4,373.68 724.24,373.69 725.08,373.6 725.92,373.42 726.77,373.19 727.61,372.92 728.45,372.63 729.3,372.36 730.14,372.12 730.98,371.89 731.82,371.63 732.67,371.36 733.51,371.08 734.35,370.82 735.19,370.58 736.04,370.37 736.88,370.22 737.72,370.12 738.57,370.07 739.41,370.04 740.25,370 741.09,369.97 741.94,369.94 742.78,369.92 743.62,369.89 744.46,369.87 745.31,369.85 746.15,369.84 746.99,369.83 747.83,369.81 748.68,369.81 749.52,369.8 750.36,369.8 751.21,369.8 752.05,369.8 752.89,369.8 753.73,369.8 754.58,369.8 755.42,369.8 756.26,369.8 757.1,369.8 757.95,369.8 758.79,369.8 759.63,369.8 760.47,369.8 761.32,369.8 762.16,369.8 763,369.8 763.85,369.8 764.69,369.8 765.53,369.79 766.37,369.75 767.22,369.7 768.06,369.63 768.9,369.54 769.74,369.44 770.59,369.33 771.43,369.21 772.27,369.08 773.12,368.95 773.96,368.82 774.8,368.67 775.64,368.48 776.49,368.25 777.33,368 778.17,367.73 779.01,367.45 779.86,367.19 780.7,366.93 781.54,366.71 782.38,366.51 783.23,366.33 784.07,366.16 784.91,365.98 785.76,365.82 786.6,365.66 787.44,365.5 788.28,365.35 789.13,365.2 789.97,365.06 790.81,364.93 791.65,364.8 792.5,364.67 793.34,364.55 794.18,364.42 795.03,364.29 795.87,364.16 796.71,364.03 797.55,363.9 798.4,363.79 799.24,363.69 800.08,363.61 800.92,363.55 801.77,363.51 802.61,363.5 803.45,363.5 804.29,363.5 805.14,363.5 805.98,363.5 806.82,363.5 807.67,363.5 808.51,363.5 809.35,363.5 810.19,363.5 811.04,363.5 811.88,363.5 812.72,363.5 813.56,363.5 814.41,363.5 815.25,363.5 816.09,363.5 816.93,363.5 817.78,363.5 818.62,363.5 819.46,363.5 820.31,363.5 821.15,363.5 821.99,363.5 822.83,363.5 823.68,363.5 824.52,363.5 825.36,363.5 826.2,363.5 827.05,363.5 827.89,363.5 828.73,363.5 829.58,363.5 830.42,363.5 831.26,363.5 832.1,363.5 832.95,363.5 833.79,363.5 834.63,363.5 835.47,363.5 836.32,363.5 837.16,363.5 838,363.5 838.84,363.5 839.69,363.5 840.53,363.5 841.37,363.5 842.22,363.5 843.06,363.5 843.9,363.5 844.74,363.5 845.59,363.5 846.43,363.5 847.27,363.5 848.11,363.5 848.96,363.5 849.8,363.5 850.64,363.5 851.48,363.5 852.33,363.5 853.17,363.5 854.01,363.5 854.86,363.5 855.7,363.5 856.54,363.5 857.38,363.5 858.23,363.5 859.07,363.5 859.91,363.5 860.75,363.5 861.6,363.5 862.44,363.5 863.28,363.5 864.13,363.5 864.97,363.5 865.81,363.5 866.65,363.5 867.5,363.5 868.34,363.5 869.18,363.5 870.02,363.5 870.87,363.5 871.71,363.5 872.55,363.5 873.39,363.5 874.24,363.5 875.08,363.5 875.92,363.5 876.77,363.5 877.61,363.5 878.45,363.5 879.29,363.5 880.14,363.5 880.98,363.5 881.82,363.5 882.66,363.5 883.51,363.5 884.35,363.5 885.19,363.5 886.04,363.5 886.88,363.5 887.72,363.5 888.56,363.5 889.41,363.5 890.25,363.5 891.09,363.5 891.93,363.5 892.78,363.5 893.62,363.5 894.46,363.5 895.3,363.5 896.15,363.5 896.99,363.5 897.83,363.5 898.68,363.5 899.52,363.5 900.36,363.5 901.2,363.5 902.05,363.5 902.89,363.5 903.73,363.5 904.57,363.5 905.42,363.5 906.26,363.5 907.1,363.5 907.94,363.5 908.79,363.5 909.63,363.5 910.47,363.5 911.32,363.5 912.16,363.5 913,363.5 913.84,363.5 914.69,363.5 915.53,363.5 916.37,363.5 917.21,363.5 918.06,363.5 918.9,363.5 919.74,363.5 920.59,363.5 921.43,363.5 922.27,363.5 923.11,363.5 923.96,363.5 924.8,363.5 925.64,363.5 926.48,363.5 927.33,363.5 928.17,363.5 929.01,363.5 929.85,363.5 930.7,363.5 931.54,363.5 932.38,363.5 933.23,363.5 934.07,363.5 934.91,363.5 935.75,363.5 936.6,363.5 937.44,363.5 938.28,363.5 939.12,363.5 939.97,363.5 940.81,363.5 941.65,363.5 942.49,363.5 943.34,363.5 944.18,363.5 945.02,363.5 945.87,363.5 946.71,363.5 947.55,363.5 948.39,363.5 949.24,363.5 950.08,363.5 950.92,363.5 951.76,363.5 952.61,363.5 953.45,363.5 954.29,363.5 955.14,363.5 955.98,363.5 956.82,363.5 957.66,363.5 958.51,363.5 959.35,363.5 960.19,363.5 961.03,363.5 961.88,363.5 962.72,363.5 963.56,363.5 964.4,363.5 965.25,363.5 966.09,363.5 966.93,363.5 967.78,363.5 968.62,363.5 969.46,363.5 970.3,363.5 971.15,363.5 971.99,363.5 972.83,363.5 973.67,363.5 974.52,363.5 975.36,363.5 976.2,363.5 977.05,363.5 977.89,363.5 978.73,363.5 979.57,363.5 980.42,363.5 981.26,363.5 982.1,363.5 982.94,363.5 983.79,363.5 984.63,363.5 985.47,363.5 986.31,363.5 987.16,363.5 988,363.5" fill="none" stroke="#00ff00" stroke-width="1.2" stroke-linejoin="round"/>
<polyline points="567.5,454.9 568.34,454.96 569.19,455.02 570.03,455.09 570.87,455.15 571.71,455.22 572.56,455.29 573.4,455.35 574.24,455.42 575.08,455.49 575.93,455.56 576.77,455.64 577.61,455.71 578.45,455.78 579.3,455.86 580.14,455.93 580.98,456.01 581.83,456.08 582.67,456.16 583.51,456.24 584.35,456.32 585.2,456.4 586.04,456.48 586.88,456.56 587.72,456.64 588.57,456.73 589.41,456.81 590.25,456.9 591.1,456.98 591.94,457.07 592.78,457.16 593.62,457.24 594.47,457.33 595.31,457.42 596.15,457.51 596.99,457.6 597.84,457.69 598.68,457.78 599.52,457.87 600.36,457.96 601.21,458.06 602.05,458.15 602.89,458.24 603.74,458.34 604.58,458.44 605.42,458.53 606.26,458.63 607.11,458.73 607.95,458.83 608.79,458.93 609.63,459.04 610.48,459.14 611.32,459.25 612.16,459.36 613.01,459.47 613.85,459.58 614.69,459.69 615.53,459.81 616.38,459.92 617.22,460.04 618.06,460.16 618.9,460.28 619.75,460.41 620.59,460.53 621.43,460.66 622.27,460.79 623.12,460.93 623.96,461.06 624.8,461.2 625.65,461.34 626.49,461.49 627.33,461.64 628.17,461.8 629.02,461.96 629.86,462.13 630.7,462.3 631.54,462.48 632.39,462.66 633.23,462.84 634.07,463.04 634.91,463.23 635.76,463.43 636.6,463.63 637.44,463.84 638.29,464.06 639.13,464.27 639.97,464.49 640.81,464.72 641.66,464.95 642.5,465.18 643.34,465.42 644.18,465.67 645.03,465.93 645.87,466.19 646.71,466.47 647.56,466.76 648.4,467.05 649.24,467.37 650.08,467.69 650.93,468.03 651.77,468.39 652.61,468.76 653.45,469.16 654.3,469.59 655.14,470.03 655.98,470.51 656.82,471 657.67,471.52 658.51,472.06 659.35,472.62 660.2,473.2 661.04,473.81 661.88,474.44 662.72,475.08 663.57,475.75 664.41,476.48 665.25,477.29 666.09,478.16 666.94,479.08 667.78,480.05 668.62,481.04 669.46,482.05 670.31,483.06 671.15,484.07 671.99,485.05 672.84,486 673.68,486.93 674.52,488.01 675.36,489.14 676.21,490.2 677.05,491.05 677.89,491.54 678.73,491.65 679.58,491.71 680.42,491.76 681.26,491.79 682.11,491.8 682.95,491.38 683.79,490.09 684.63,488.23 685.48,486.11 686.32,484.07 687.16,482.4 688,480.99 688.85,479.63 689.69,478.3 690.53,477.01 691.37,475.75 692.22,474.53 693.06,473.33 693.9,472.15 694.75,471.01 695.59,469.88 696.43,468.78 697.27,467.69 698.12,466.62 698.96,465.58 699.8,464.55 700.64,463.54 701.49,462.56 702.33,461.59 703.17,460.65 704.02,459.73 704.86,458.83 705.7,457.93 706.54,457.01 707.39,456.09 708.23,455.2 709.07,454.34 709.91,453.54 710.76,452.81 711.6,452.17 712.44,451.63 713.28,451.15 714.13,450.68 714.97,450.22 715.81,449.82 716.66,449.5 717.5,449.29 718.34,449.2 719.18,449.23 720.03,449.31 720.87,449.43 721.71,449.59 722.55,449.77 723.4,449.97 724.24,450.18 725.08,450.38 725.92,450.56 726.77,450.72 727.61,450.84 728.45,450.97 729.3,451.11 730.14,451.24 730.98,451.36 731.82,451.46 732.67,451.54 733.51,451.59 734.35,451.59 735.19,451.5 736.04,451.3 736.88,451.01 737.72,450.64 738.57,450.21 739.41,449.74 740.25,449.25 741.09,448.74 741.94,448.24 742.78,447.7 743.62,447.08 744.46,446.37 745.31,445.6 746.15,444.76 746.99,443.89 747.83,442.97 748.68,442.03 749.52,441.08 750.36,440.12 751.21,439.17 752.05,438.23 752.89,437.33 753.73,436.47 754.58,435.6 755.42,434.71 756.26,433.79 757.1,432.85 757.95,431.91 758.79,430.98 759.63,430.05 760.47,429.15 761.32,428.28 762.16,427.44 763,426.66 763.85,425.93 764.69,425.27 765.53,424.68 766.37,424.14 767.22,423.63 768.06,423.14 768.9,422.68 769.74,422.25 770.59,421.85 771.43,421.48 772.27,421.15 773.12,420.86 773.96,420.59 774.8,420.32 775.64,420.05 776.49,419.8 777.33,419.58 778.17,419.4 779.01,419.27 779.86,419.21 780.7,419.21 781.54,419.26 782.38,419.36 783.23,419.49 784.07,419.65 784.91,419.83 785.76,420.03 786.6,420.23 787.44,420.44 788.28,420.64 789.13,420.83 789.97,421.02 790.81,421.23 791.65,421.46 792.5,421.69 793.34,421.94 794.18,422.19 795.03,422.44 795.87,422.7 796.71,422.96 797.55,423.21 798.4,423.45 799.24,423.69 800.08,423.92 800.92,424.13 801.77,424.34 802.61,424.54 803.45,424.74 804.29,424.93 805.14,425.13 805.98,425.32 806.82,425.5 807.67,425.69 808.51,425.87 809.35,426.05 810.19,426.23 811.04,426.4 811.88,426.57 812.72,426.74 813.56,426.92 814.41,427.08 815.25,427.25 816.09,427.42 816.93,427.59 817.78,427.75 818.62,427.91 819.46,428.08 820.31,428.23 821.15,428.39 821.99,428.55 822.83,428.7 823.68,428.85 824.52,429 825.36,429.14 826.2,429.28 827.05,429.42 827.89,429.55 828.73,429.68 829.58,429.81 830.42,429.93 831.26,430.06 832.1,430.18 832.95,430.29 833.79,430.41 834.63,430.52 835.47,430.63 836.32,430.74 837.16,430.85 838,430.95 838.84,431.06 839.69,431.16 840.53,431.26 841.37,431.37 842.22,431.47 843.06,431.57 843.9,431.68 844.74,431.78 845.59,431.88 846.43,431.98 847.27,432.09 848.11,432.19 848.96,432.29 849.8,432.39 850.64,432.49 851.48,432.59 852.33,432.69 853.17,432.8 854.01,432.9 854.86,432.99 855.7,433.09 856.54,433.19 857.38,433.29 858.23,433.39 859.07,433.49 859.91,433.58 860.75,433.68 861.6,433.77 862.44,433.87 863.28,433.96 864.13,434.06 864.97,434.15 865.81,434.24 866.65,434.33 867.5,434.42 868.34,434.51 869.18,434.6 870.02,434.69 870.87,434.77 871.71,434.86 872.55,434.94 873.39,435.03 874.24,435.11 875.08,435.19 875.92,435.27 876.77,435.35 877.61,435.43 878.45,435.51 879.29,435.59 880.14,435.66 880.98,435.74 881.82,435.81 882.66,435.88 883.51,435.95 884.35,436.02 885.19,436.09 886.04,436.15 886.88,436.22 887.72,436.28 888.56,436.34 889.41,436.4 890.25,436.47 891.09,436.53 891.93,436.59 892.78,436.65 893.62,436.71 894.46,436.77 895.3,436.83 896.15,436.89 896.99,436.95 897.83,437.01 898.68,437.07 899.52,437.13 900.36,437.19 901.2,437.25 902.05,437.3 902.89,437.36 903.73,437.42 904.57,437.47 905.42,437.53 906.26,437.59 907.1,437.64 907.94,437.69 908.79,437.75 909.63,437.8 910.47,437.85 911.32,437.9 912.16,437.95 913,438 913.84,438.05 914.69,438.1 915.53,438.15 916.37,438.2 917.21,438.24 918.06,438.29 918.9,438.33 919.74,438.38 920.59,438.42 921.43,438.46 922.27,438.5 923.11,438.54 923.96,438.58 924.8,438.61 925.64,438.65 926.48,438.69 927.33,438.72 928.17,438.75 929.01,438.78 929.85,438.82 930.7,438.84 931.54,438.87 932.38,438.9 933.23,438.93 934.07,438.95 934.91,438.97 935.75,438.99 936.6,439.01 937.44,439.03 938.28,439.06 939.12,439.08 939.97,439.1 940.81,439.12 941.65,439.14 942.49,439.16 943.34,439.18 944.18,439.19 945.02,439.21 945.87,439.23 946.71,439.25 947.55,439.27 948.39,439.29 949.24,439.31 950.08,439.33 950.92,439.34 951.76,439.36 952.61,439.38 953.45,439.4 954.29,439.41 955.14,439.43 955.98,439.45 956.82,439.46 957.66,439.48 958.51,439.5 959.35,439.51 960.19,439.53 961.03,439.54 961.88,439.56 962.72,439.57 963.56,439.58 964.4,439.6 965.25,439.61 966.09,439.62 966.93,439.64 967.78,439.65 968.62,439.66 969.46,439.67 970.3,439.68 971.15,439.69 971.99,439.7 972.83,439.71 973.67,439.72 974.52,439.73 975.36,439.74 976.2,439.75 977.05,439.75 977.89,439.76 978.73,439.77 979.57,439.77 980.42,439.78 981.26,439.78 982.1,439.79 982.94,439.79 983.79,439.79 984.63,439.8 985.47,439.8 986.31,439.8 987.16,439.8 988,439.8" fill="none" stroke="#ff00ff" stroke-width="1.15" stroke-linejoin="round"/>
<polyline points="567.5,458.9 568.34,459 569.19,459.1 570.03,459.2 570.87,459.31 571.71,459.41 572.56,459.51 573.4,459.62 574.24,459.72 575.08,459.83 575.93,459.93 576.77,460.04 577.61,460.14 578.45,460.25 579.3,460.36 580.14,460.46 580.98,460.57 581.83,460.68 582.67,460.79 583.51,460.9 584.35,461.01 585.2,461.12 586.04,461.23 586.88,461.35 587.72,461.46 588.57,461.57 589.41,461.68 590.25,461.8 591.1,461.91 591.94,462.03 592.78,462.14 593.62,462.26 594.47,462.38 595.31,462.49 596.15,462.62 596.99,462.74 597.84,462.86 598.68,462.98 599.52,463.11 600.36,463.24 601.21,463.36 602.05,463.49 602.89,463.62 603.74,463.75 604.58,463.88 605.42,464.01 606.26,464.14 607.11,464.27 607.95,464.4 608.79,464.53 609.63,464.66 610.48,464.79 611.32,464.92 612.16,465.05 613.01,465.18 613.85,465.31 614.69,465.44 615.53,465.57 616.38,465.69 617.22,465.82 618.06,465.94 618.9,466.07 619.75,466.19 620.59,466.31 621.43,466.43 622.27,466.55 623.12,466.67 623.96,466.79 624.8,466.9 625.65,467.01 626.49,467.11 627.33,467.21 628.17,467.3 629.02,467.39 629.86,467.47 630.7,467.56 631.54,467.64 632.39,467.73 633.23,467.82 634.07,467.91 634.91,468.01 635.76,468.12 636.6,468.23 637.44,468.36 638.29,468.49 639.13,468.64 639.97,468.79 640.81,468.98 641.66,469.2 642.5,469.46 643.34,469.74 644.18,470.06 645.03,470.4 645.87,470.77 646.71,471.15 647.56,471.55 648.4,471.96 649.24,472.39 650.08,472.82 650.93,473.25 651.77,473.68 652.61,474.13 653.45,474.6 654.3,475.1 655.14,475.62 655.98,476.17 656.82,476.73 657.67,477.31 658.51,477.9 659.35,478.5 660.2,479.12 661.04,479.74 661.88,480.38 662.72,481.01 663.57,481.65 664.41,482.32 665.25,483.03 666.09,483.77 666.94,484.53 667.78,485.31 668.62,486.09 669.46,486.86 670.31,487.62 671.15,488.34 671.99,489.03 672.84,489.67 673.68,490.26 674.52,490.82 675.36,491.35 676.21,491.84 677.05,492.28 677.89,492.68 678.73,493.11 679.58,493.53 680.42,493.92 681.26,494.26 682.11,494.52 682.95,494.67 683.79,494.65 684.63,493.99 685.48,492.74 686.32,491.09 687.16,489.24 688,487.4 688.85,485.76 689.69,484.36 690.53,482.97 691.37,481.57 692.22,480.18 693.06,478.8 693.9,477.43 694.75,476.07 695.59,474.74 696.43,473.42 697.27,472.13 698.12,470.82 698.96,469.51 699.8,468.2 700.64,466.91 701.49,465.63 702.33,464.4 703.17,463.2 704.02,462.07 704.86,460.99 705.7,460 706.54,459.05 707.39,458.11 708.23,457.18 709.07,456.3 709.91,455.46 710.76,454.68 711.6,453.97 712.44,453.35 713.28,452.82 714.13,452.36 714.97,451.91 715.81,451.49 716.66,451.14 717.5,450.9 718.34,450.8 719.18,450.83 720.03,450.9 720.87,451.02 721.71,451.17 722.55,451.34 723.4,451.52 724.24,451.7 725.08,451.87 725.92,452.01 726.77,452.12 727.61,452.19 728.45,452.2 729.3,452.2 730.14,452.2 730.98,452.2 731.82,452.2 732.67,452.2 733.51,452.2 734.35,452.2 735.19,452.2 736.04,452.2 736.88,452.13 737.72,451.92 738.57,451.6 739.41,451.17 740.25,450.67 741.09,450.12 741.94,449.54 742.78,448.95 743.62,448.38 744.46,447.82 745.31,447.2 746.15,446.53 746.99,445.81 747.83,445.05 748.68,444.25 749.52,443.43 750.36,442.6 751.21,441.76 752.05,440.92 752.89,440.09 753.73,439.28 754.58,438.49 755.42,437.74 756.26,437.02 757.1,436.28 757.95,435.53 758.79,434.79 759.63,434.04 760.47,433.31 761.32,432.6 762.16,431.92 763,431.26 763.85,430.65 764.69,430.09 765.53,429.58 766.37,429.1 767.22,428.62 768.06,428.16 768.9,427.72 769.74,427.31 770.59,426.93 771.43,426.61 772.27,426.34 773.12,426.14 773.96,425.98 774.8,425.84 775.64,425.7 776.49,425.58 777.33,425.47 778.17,425.39 779.01,425.33 779.86,425.3 780.7,425.3 781.54,425.33 782.38,425.37 783.23,425.43 784.07,425.5 784.91,425.59 785.76,425.68 786.6,425.79 787.44,425.89 788.28,426.01 789.13,426.12 789.97,426.25 790.81,426.42 791.65,426.61 792.5,426.83 793.34,427.07 794.18,427.32 795.03,427.58 795.87,427.84 796.71,428.1 797.55,428.36 798.4,428.6 799.24,428.83 800.08,429.04 800.92,429.23 801.77,429.4 802.61,429.56 803.45,429.72 804.29,429.87 805.14,430.02 805.98,430.16 806.82,430.3 807.67,430.44 808.51,430.57 809.35,430.71 810.19,430.84 811.04,430.97 811.88,431.1 812.72,431.24 813.56,431.37 814.41,431.51 815.25,431.64 816.09,431.78 816.93,431.91 817.78,432.05 818.62,432.18 819.46,432.32 820.31,432.45 821.15,432.57 821.99,432.7 822.83,432.82 823.68,432.94 824.52,433.06 825.36,433.17 826.2,433.27 827.05,433.37 827.89,433.47 828.73,433.56 829.58,433.64 830.42,433.72 831.26,433.8 832.1,433.87 832.95,433.94 833.79,434.01 834.63,434.08 835.47,434.14 836.32,434.21 837.16,434.27 838,434.34 838.84,434.41 839.69,434.47 840.53,434.54 841.37,434.61 842.22,434.68 843.06,434.75 843.9,434.82 844.74,434.89 845.59,434.96 846.43,435.03 847.27,435.1 848.11,435.17 848.96,435.24 849.8,435.31 850.64,435.38 851.48,435.45 852.33,435.52 853.17,435.59 854.01,435.66 854.86,435.73 855.7,435.8 856.54,435.87 857.38,435.94 858.23,436.01 859.07,436.07 859.91,436.14 860.75,436.21 861.6,436.28 862.44,436.35 863.28,436.42 864.13,436.49 864.97,436.55 865.81,436.62 866.65,436.69 867.5,436.76 868.34,436.82 869.18,436.89 870.02,436.96 870.87,437.02 871.71,437.09 872.55,437.15 873.39,437.22 874.24,437.28 875.08,437.35 875.92,437.41 876.77,437.48 877.61,437.54 878.45,437.61 879.29,437.67 880.14,437.73 880.98,437.79 881.82,437.86 882.66,437.92 883.51,437.98 884.35,438.04 885.19,438.1 886.04,438.16 886.88,438.22 887.72,438.28 888.56,438.34 889.41,438.4 890.25,438.46 891.09,438.52 891.93,438.58 892.78,438.64 893.62,438.7 894.46,438.76 895.3,438.82 896.15,438.89 896.99,438.95 897.83,439.01 898.68,439.07 899.52,439.13 900.36,439.2 901.2,439.26 902.05,439.32 902.89,439.38 903.73,439.44 904.57,439.5 905.42,439.56 906.26,439.62 907.1,439.69 907.94,439.75 908.79,439.8 909.63,439.86 910.47,439.92 911.32,439.98 912.16,440.04 913,440.1 913.84,440.15 914.69,440.21 915.53,440.26 916.37,440.32 917.21,440.37 918.06,440.43 918.9,440.48 919.74,440.53 920.59,440.58 921.43,440.63 922.27,440.68 923.11,440.72 923.96,440.77 924.8,440.82 925.64,440.86 926.48,440.9 927.33,440.95 928.17,440.99 929.01,441.03 929.85,441.06 930.7,441.1 931.54,441.14 932.38,441.17 933.23,441.2 934.07,441.23 934.91,441.26 935.75,441.29 936.6,441.32 937.44,441.35 938.28,441.37 939.12,441.4 939.97,441.43 940.81,441.45 941.65,441.48 942.49,441.51 943.34,441.53 944.18,441.56 945.02,441.58 945.87,441.61 946.71,441.64 947.55,441.66 948.39,441.69 949.24,441.71 950.08,441.74 950.92,441.76 951.76,441.79 952.61,441.81 953.45,441.83 954.29,441.86 955.14,441.88 955.98,441.9 956.82,441.93 957.66,441.95 958.51,441.97 959.35,441.99 960.19,442.01 961.03,442.03 961.88,442.05 962.72,442.07 963.56,442.09 964.4,442.11 965.25,442.13 966.09,442.15 966.93,442.17 967.78,442.18 968.62,442.2 969.46,442.22 970.3,442.23 971.15,442.25 971.99,442.26 972.83,442.27 973.67,442.29 974.52,442.3 975.36,442.31 976.2,442.32 977.05,442.33 977.89,442.34 978.73,442.35 979.57,442.36 980.42,442.37 981.26,442.37 982.1,442.38 982.94,442.38 983.79,442.39 984.63,442.39 985.47,442.4 986.31,442.4 987.16,442.4 988,442.4" fill="none" stroke="#ff00ff" stroke-width="1.15" stroke-linejoin="round"/>
<polyline points="567.5,566.2 568.34,565.81 569.19,565.42 570.03,565.03 570.87,564.65 571.71,564.27 572.56,563.89 573.4,563.51 574.24,563.13 575.08,562.75 575.93,562.38 576.77,562.01 577.61,561.64 578.45,561.28 579.3,560.92 580.14,560.56 580.98,560.2 581.83,559.85 582.67,559.49 583.51,559.14 584.35,558.8 585.2,558.46 586.04,558.12 586.88,557.78 587.72,557.45 588.57,557.12 589.41,556.79 590.25,556.47 591.1,556.15 591.94,555.84 592.78,555.53 593.62,555.23 594.47,554.93 595.31,554.64 596.15,554.35 596.99,554.07 597.84,553.79 598.68,553.51 599.52,553.24 600.36,552.97 601.21,552.7 602.05,552.44 602.89,552.17 603.74,551.91 604.58,551.65 605.42,551.39 606.26,551.13 607.11,550.86 607.95,550.6 608.79,550.34 609.63,550.08 610.48,549.82 611.32,549.55 612.16,549.29 613.01,549.02 613.85,548.75 614.69,548.47 615.53,548.2 616.38,547.91 617.22,547.63 618.06,547.34 618.9,547.05 619.75,546.75 620.59,546.45 621.43,546.14 622.27,545.82 623.12,545.5 623.96,545.17 624.8,544.84 625.65,544.5 626.49,544.16 627.33,543.81 628.17,543.46 629.02,543.1 629.86,542.74 630.7,542.38 631.54,542.01 632.39,541.63 633.23,541.25 634.07,540.87 634.91,540.48 635.76,540.09 636.6,539.7 637.44,539.29 638.29,538.89 639.13,538.48 639.97,538.07 640.81,537.65 641.66,537.22 642.5,536.8 643.34,536.37 644.18,535.93 645.03,535.49 645.87,535.04 646.71,534.6 647.56,534.14 648.4,533.68 649.24,533.22 650.08,532.75 650.93,532.28 651.77,531.78 652.61,531.28 653.45,530.76 654.3,530.23 655.14,529.69 655.98,529.14 656.82,528.59 657.67,528.02 658.51,527.45 659.35,526.88 660.2,526.3 661.04,525.71 661.88,525.13 662.72,524.54 663.57,523.96 664.41,523.37 665.25,522.78 666.09,522.2 666.94,521.62 667.78,521.05 668.62,520.48 669.46,519.92 670.31,519.37 671.15,518.82 671.99,518.29 672.84,517.77 673.68,517.26 674.52,516.76 675.36,516.27 676.21,515.79 677.05,515.3 677.89,514.82 678.73,514.34 679.58,513.85 680.42,513.36 681.26,512.86 682.11,512.35 682.95,511.83 683.79,511.29 684.63,510.74 685.48,510.17 686.32,509.57 687.16,508.95 688,508.3 688.85,507.62 689.69,506.91 690.53,506.16 691.37,505.4 692.22,504.61 693.06,503.81 693.9,503 694.75,502.17 695.59,501.34 696.43,500.51 697.27,499.68 698.12,498.86 698.96,498.05 699.8,497.23 700.64,496.39 701.49,495.55 702.33,494.7 703.17,493.84 704.02,492.98 704.86,492.12 705.7,491.27 706.54,490.42 707.39,489.58 708.23,488.76 709.07,487.94 709.91,487.06 710.76,486.17 711.6,485.3 712.44,484.47 713.28,483.73 714.13,483.12 714.97,482.64 715.81,482.17 716.66,481.73 717.5,481.32 718.34,480.99 719.18,480.74 720.03,480.61 720.87,480.6 721.71,480.62 722.55,480.64 723.4,480.67 724.24,480.72 725.08,480.77 725.92,480.83 726.77,480.89 727.61,480.95 728.45,481.02 729.3,481.14 730.14,481.32 730.98,481.52 731.82,481.74 732.67,481.96 733.51,482.17 734.35,482.34 735.19,482.45 736.04,482.5 736.88,482.5 737.72,482.5 738.57,482.5 739.41,482.5 740.25,482.5 741.09,482.5 741.94,482.5 742.78,482.5 743.62,482.5 744.46,482.5 745.31,482.5 746.15,482.5 746.99,482.5 747.83,482.5 748.68,482.5 749.52,482.5 750.36,482.5 751.21,482.5 752.05,482.5 752.89,482.5 753.73,482.5 754.58,482.46 755.42,482.35 756.26,482.18 757.1,481.97 757.95,481.74 758.79,481.49 759.63,481.25 760.47,481.03 761.32,480.84 762.16,480.7 763,480.61 763.85,480.6 764.69,480.6 765.53,480.6 766.37,480.6 767.22,480.6 768.06,480.6 768.9,480.6 769.74,480.6 770.59,480.6 771.43,480.6 772.27,480.6 773.12,480.6 773.96,480.63 774.8,480.77 775.64,481 776.49,481.29 777.33,481.64 778.17,482.03 779.01,482.45 779.86,482.86 780.7,483.27 781.54,483.66 782.38,484.06 783.23,484.49 784.07,484.94 784.91,485.41 785.76,485.91 786.6,486.41 787.44,486.93 788.28,487.46 789.13,488 789.97,488.54 790.81,489.08 791.65,489.61 792.5,490.15 793.34,490.68 794.18,491.21 795.03,491.76 795.87,492.32 796.71,492.89 797.55,493.46 798.4,494.03 799.24,494.6 800.08,495.17 800.92,495.74 801.77,496.31 802.61,496.86 803.45,497.41 804.29,497.95 805.14,498.47 805.98,499 806.82,499.53 807.67,500.06 808.51,500.58 809.35,501.11 810.19,501.62 811.04,502.13 811.88,502.63 812.72,503.12 813.56,503.59 814.41,504.05 815.25,504.49 816.09,504.91 816.93,505.3 817.78,505.67 818.62,506.02 819.46,506.35 820.31,506.66 821.15,506.97 821.99,507.28 822.83,507.59 823.68,507.91 824.52,508.24 825.36,508.59 826.2,508.96 827.05,509.36 827.89,509.79 828.73,510.25 829.58,510.74 830.42,511.23 831.26,511.74 832.1,512.24 832.95,512.75 833.79,513.23 834.63,513.7 835.47,514.15 836.32,514.56 837.16,514.94 838,515.29 838.84,515.63 839.69,515.96 840.53,516.28 841.37,516.6 842.22,516.91 843.06,517.22 843.9,517.52 844.74,517.82 845.59,518.11 846.43,518.39 847.27,518.67 848.11,518.94 848.96,519.21 849.8,519.47 850.64,519.73 851.48,519.99 852.33,520.24 853.17,520.48 854.01,520.73 854.86,520.96 855.7,521.2 856.54,521.43 857.38,521.66 858.23,521.88 859.07,522.1 859.91,522.32 860.75,522.54 861.6,522.75 862.44,522.97 863.28,523.17 864.13,523.38 864.97,523.59 865.81,523.79 866.65,523.98 867.5,524.18 868.34,524.36 869.18,524.55 870.02,524.73 870.87,524.91 871.71,525.09 872.55,525.26 873.39,525.43 874.24,525.6 875.08,525.77 875.92,525.94 876.77,526.1 877.61,526.26 878.45,526.42 879.29,526.58 880.14,526.74 880.98,526.9 881.82,527.06 882.66,527.22 883.51,527.37 884.35,527.53 885.19,527.69 886.04,527.85 886.88,528.01 887.72,528.17 888.56,528.33 889.41,528.49 890.25,528.66 891.09,528.82 891.93,528.99 892.78,529.15 893.62,529.31 894.46,529.48 895.3,529.65 896.15,529.81 896.99,529.97 897.83,530.14 898.68,530.3 899.52,530.47 900.36,530.63 901.2,530.79 902.05,530.95 902.89,531.11 903.73,531.27 904.57,531.43 905.42,531.59 906.26,531.74 907.1,531.9 907.94,532.05 908.79,532.2 909.63,532.35 910.47,532.5 911.32,532.64 912.16,532.78 913,532.92 913.84,533.06 914.69,533.2 915.53,533.33 916.37,533.46 917.21,533.58 918.06,533.71 918.9,533.83 919.74,533.95 920.59,534.07 921.43,534.18 922.27,534.3 923.11,534.41 923.96,534.53 924.8,534.64 925.64,534.75 926.48,534.85 927.33,534.96 928.17,535.07 929.01,535.17 929.85,535.28 930.7,535.38 931.54,535.48 932.38,535.58 933.23,535.68 934.07,535.78 934.91,535.88 935.75,535.98 936.6,536.07 937.44,536.17 938.28,536.26 939.12,536.36 939.97,536.45 940.81,536.55 941.65,536.64 942.49,536.74 943.34,536.83 944.18,536.92 945.02,537.01 945.87,537.11 946.71,537.2 947.55,537.29 948.39,537.39 949.24,537.48 950.08,537.57 950.92,537.67 951.76,537.76 952.61,537.85 953.45,537.95 954.29,538.04 955.14,538.14 955.98,538.23 956.82,538.33 957.66,538.42 958.51,538.52 959.35,538.61 960.19,538.71 961.03,538.8 961.88,538.89 962.72,538.99 963.56,539.08 964.4,539.18 965.25,539.27 966.09,539.36 966.93,539.45 967.78,539.55 968.62,539.64 969.46,539.73 970.3,539.82 971.15,539.91 971.99,540.01 972.83,540.1 973.67,540.19 974.52,540.28 975.36,540.37 976.2,540.46 977.05,540.55 977.89,540.64 978.73,540.73 979.57,540.82 980.42,540.91 981.26,541 982.1,541.09 982.94,541.17 983.79,541.26 984.63,541.35 985.47,541.44 986.31,541.53 987.16,541.61 988,541.7" fill="none" stroke="#0000ff" stroke-width="1.3" stroke-linejoin="round"/>
<polyline points="567.5,566.8 568.34,566.41 569.19,566.02 570.03,565.63 570.87,565.25 571.71,564.86 572.56,564.48 573.4,564.1 574.24,563.72 575.08,563.35 575.93,562.97 576.77,562.6 577.61,562.24 578.45,561.87 579.3,561.51 580.14,561.15 580.98,560.79 581.83,560.44 582.67,560.09 583.51,559.74 584.35,559.39 585.2,559.05 586.04,558.71 586.88,558.38 587.72,558.04 588.57,557.72 589.41,557.39 590.25,557.07 591.1,556.75 591.94,556.44 592.78,556.13 593.62,555.83 594.47,555.54 595.31,555.25 596.15,554.96 596.99,554.68 597.84,554.4 598.68,554.13 599.52,553.86 600.36,553.59 601.21,553.33 602.05,553.06 602.89,552.8 603.74,552.54 604.58,552.28 605.42,552.02 606.26,551.76 607.11,551.51 607.95,551.25 608.79,550.99 609.63,550.73 610.48,550.47 611.32,550.21 612.16,549.95 613.01,549.68 613.85,549.41 614.69,549.14 615.53,548.86 616.38,548.59 617.22,548.3 618.06,548.02 618.9,547.73 619.75,547.43 620.59,547.13 621.43,546.83 622.27,546.51 623.12,546.2 623.96,545.87 624.8,545.54 625.65,545.21 626.49,544.87 627.33,544.52 628.17,544.17 629.02,543.82 629.86,543.46 630.7,543.1 631.54,542.73 632.39,542.36 633.23,541.99 634.07,541.61 634.91,541.22 635.76,540.83 636.6,540.44 637.44,540.04 638.29,539.64 639.13,539.23 639.97,538.82 640.81,538.41 641.66,537.99 642.5,537.57 643.34,537.14 644.18,536.71 645.03,536.27 645.87,535.83 646.71,535.38 647.56,534.93 648.4,534.48 649.24,534.02 650.08,533.55 650.93,533.08 651.77,532.59 652.61,532.09 653.45,531.58 654.3,531.05 655.14,530.52 655.98,529.97 656.82,529.42 657.67,528.86 658.51,528.3 659.35,527.73 660.2,527.15 661.04,526.57 661.88,525.99 662.72,525.41 663.57,524.83 664.41,524.24 665.25,523.66 666.09,523.08 666.94,522.51 667.78,521.94 668.62,521.37 669.46,520.82 670.31,520.27 671.15,519.72 671.99,519.19 672.84,518.67 673.68,518.16 674.52,517.66 675.36,517.17 676.21,516.69 677.05,516.2 677.89,515.72 678.73,515.24 679.58,514.75 680.42,514.26 681.26,513.76 682.11,513.25 682.95,512.72 683.79,512.19 684.63,511.63 685.48,511.06 686.32,510.47 687.16,509.85 688,509.21 688.85,508.53 689.69,507.82 690.53,507.09 691.37,506.33 692.22,505.55 693.06,504.76 693.9,503.95 694.75,503.14 695.59,502.32 696.43,501.5 697.27,500.67 698.12,499.86 698.96,499.05 699.8,498.23 700.64,497.4 701.49,496.56 702.33,495.71 703.17,494.86 704.02,494 704.86,493.14 705.7,492.29 706.54,491.44 707.39,490.59 708.23,489.76 709.07,488.93 709.91,488.05 710.76,487.14 711.6,486.25 712.44,485.41 713.28,484.66 714.13,484.03 714.97,483.53 715.81,483.04 716.66,482.58 717.5,482.16 718.34,481.81 719.18,481.55 720.03,481.42 720.87,481.4 721.71,481.42 722.55,481.44 723.4,481.48 724.24,481.52 725.08,481.57 725.92,481.63 726.77,481.69 727.61,481.75 728.45,481.82 729.3,481.93 730.14,482.09 730.98,482.28 731.82,482.48 732.67,482.68 733.51,482.86 734.35,483.02 735.19,483.14 736.04,483.2 736.88,483.22 737.72,483.24 738.57,483.25 739.41,483.27 740.25,483.29 741.09,483.3 741.94,483.31 742.78,483.33 743.62,483.34 744.46,483.35 745.31,483.36 746.15,483.37 746.99,483.37 747.83,483.38 748.68,483.39 749.52,483.39 750.36,483.39 751.21,483.4 752.05,483.4 752.89,483.4 753.73,483.4 754.58,483.39 755.42,483.36 756.26,483.32 757.1,483.26 757.95,483.2 758.79,483.14 759.63,483.07 760.47,483.01 761.32,482.96 762.16,482.93 763,482.9 763.85,482.9 764.69,482.92 765.53,482.97 766.37,483.03 767.22,483.12 768.06,483.22 768.9,483.33 769.74,483.46 770.59,483.6 771.43,483.75 772.27,483.9 773.12,484.06 773.96,484.25 774.8,484.5 775.64,484.81 776.49,485.16 777.33,485.55 778.17,485.96 779.01,486.39 779.86,486.82 780.7,487.25 781.54,487.67 782.38,488.1 783.23,488.56 784.07,489.03 784.91,489.52 785.76,490.02 786.6,490.53 787.44,491.04 788.28,491.56 789.13,492.07 789.97,492.59 790.81,493.09 791.65,493.59 792.5,494.07 793.34,494.54 794.18,495.01 795.03,495.48 795.87,495.94 796.71,496.4 797.55,496.86 798.4,497.32 799.24,497.77 800.08,498.22 800.92,498.67 801.77,499.11 802.61,499.54 803.45,499.97 804.29,500.4 805.14,500.82 805.98,501.24 806.82,501.65 807.67,502.07 808.51,502.48 809.35,502.89 810.19,503.3 811.04,503.7 811.88,504.09 812.72,504.48 813.56,504.85 814.41,505.22 815.25,505.58 816.09,505.93 816.93,506.27 817.78,506.59 818.62,506.89 819.46,507.18 820.31,507.46 821.15,507.73 821.99,508.01 822.83,508.29 823.68,508.58 824.52,508.89 825.36,509.21 826.2,509.56 827.05,509.94 827.89,510.36 828.73,510.81 829.58,511.29 830.42,511.79 831.26,512.3 832.1,512.81 832.95,513.32 833.79,513.82 834.63,514.29 835.47,514.75 836.32,515.16 837.16,515.54 838,515.89 838.84,516.22 839.69,516.55 840.53,516.87 841.37,517.19 842.22,517.5 843.06,517.8 843.9,518.1 844.74,518.39 845.59,518.68 846.43,518.96 847.27,519.24 848.11,519.51 848.96,519.77 849.8,520.03 850.64,520.29 851.48,520.54 852.33,520.79 853.17,521.03 854.01,521.27 854.86,521.5 855.7,521.73 856.54,521.96 857.38,522.19 858.23,522.41 859.07,522.63 859.91,522.84 860.75,523.05 861.6,523.26 862.44,523.47 863.28,523.68 864.13,523.88 864.97,524.08 865.81,524.28 866.65,524.47 867.5,524.66 868.34,524.85 869.18,525.03 870.02,525.21 870.87,525.38 871.71,525.56 872.55,525.73 873.39,525.89 874.24,526.06 875.08,526.22 875.92,526.39 876.77,526.55 877.61,526.7 878.45,526.86 879.29,527.02 880.14,527.17 880.98,527.33 881.82,527.48 882.66,527.64 883.51,527.79 884.35,527.95 885.19,528.1 886.04,528.26 886.88,528.41 887.72,528.57 888.56,528.73 889.41,528.89 890.25,529.05 891.09,529.21 891.93,529.37 892.78,529.53 893.62,529.69 894.46,529.86 895.3,530.02 896.15,530.18 896.99,530.34 897.83,530.5 898.68,530.66 899.52,530.82 900.36,530.98 901.2,531.14 902.05,531.3 902.89,531.46 903.73,531.61 904.57,531.77 905.42,531.92 906.26,532.07 907.1,532.22 907.94,532.37 908.79,532.52 909.63,532.67 910.47,532.81 911.32,532.95 912.16,533.09 913,533.23 913.84,533.37 914.69,533.5 915.53,533.63 916.37,533.76 917.21,533.89 918.06,534.01 918.9,534.13 919.74,534.25 920.59,534.37 921.43,534.48 922.27,534.6 923.11,534.71 923.96,534.82 924.8,534.93 925.64,535.04 926.48,535.15 927.33,535.26 928.17,535.36 929.01,535.47 929.85,535.57 930.7,535.67 931.54,535.77 932.38,535.87 933.23,535.97 934.07,536.07 934.91,536.17 935.75,536.27 936.6,536.37 937.44,536.46 938.28,536.56 939.12,536.65 939.97,536.75 940.81,536.84 941.65,536.94 942.49,537.03 943.34,537.13 944.18,537.22 945.02,537.31 945.87,537.41 946.71,537.5 947.55,537.59 948.39,537.68 949.24,537.78 950.08,537.87 950.92,537.96 951.76,538.06 952.61,538.15 953.45,538.25 954.29,538.34 955.14,538.44 955.98,538.53 956.82,538.63 957.66,538.72 958.51,538.82 959.35,538.91 960.19,539.01 961.03,539.1 961.88,539.19 962.72,539.29 963.56,539.38 964.4,539.48 965.25,539.57 966.09,539.66 966.93,539.75 967.78,539.85 968.62,539.94 969.46,540.03 970.3,540.12 971.15,540.21 971.99,540.31 972.83,540.4 973.67,540.49 974.52,540.58 975.36,540.67 976.2,540.76 977.05,540.85 977.89,540.94 978.73,541.03 979.57,541.12 980.42,541.21 981.26,541.3 982.1,541.39 982.94,541.47 983.79,541.56 984.63,541.65 985.47,541.74 986.31,541.83 987.16,541.91 988,542" fill="none" stroke="#0000ff" stroke-width="1.3" stroke-linejoin="round"/>
<polyline points="567.5,408.4 568.34,408.05 569.19,407.71 570.03,407.37 570.87,407.03 571.71,406.69 572.56,406.35 573.4,406.01 574.24,405.68 575.08,405.34 575.93,405.01 576.77,404.68 577.61,404.35 578.45,404.03 579.3,403.7 580.14,403.38 580.98,403.05 581.83,402.73 582.67,402.42 583.51,402.1 584.35,401.78 585.2,401.47 586.04,401.16 586.88,400.85 587.72,400.54 588.57,400.24 589.41,399.94 590.25,399.64 591.1,399.34 591.94,399.04 592.78,398.75 593.62,398.45 594.47,398.17 595.31,397.88 596.15,397.61 596.99,397.33 597.84,397.06 598.68,396.79 599.52,396.53 600.36,396.27 601.21,396.01 602.05,395.75 602.89,395.5 603.74,395.25 604.58,395 605.42,394.75 606.26,394.5 607.11,394.25 607.95,394 608.79,393.75 609.63,393.5 610.48,393.25 611.32,393 612.16,392.75 613.01,392.49 613.85,392.24 614.69,391.98 615.53,391.72 616.38,391.45 617.22,391.19 618.06,390.92 618.9,390.64 619.75,390.37 620.59,390.08 621.43,389.8 622.27,389.51 623.12,389.21 623.96,388.91 624.8,388.6 625.65,388.29 626.49,387.97 627.33,387.65 628.17,387.32 629.02,386.99 629.86,386.66 630.7,386.32 631.54,385.98 632.39,385.64 633.23,385.29 634.07,384.93 634.91,384.58 635.76,384.22 636.6,383.86 637.44,383.49 638.29,383.12 639.13,382.75 639.97,382.37 640.81,382 641.66,381.61 642.5,381.23 643.34,380.84 644.18,380.45 645.03,380.06 645.87,379.66 646.71,379.26 647.56,378.86 648.4,378.45 649.24,378.05 650.08,377.64 650.93,377.22 651.77,376.81 652.61,376.39 653.45,375.97 654.3,375.55 655.14,375.12 655.98,374.69 656.82,374.26 657.67,373.82 658.51,373.38 659.35,372.93 660.2,372.48 661.04,372.03 661.88,371.57 662.72,371.1 663.57,370.64 664.41,370.16 665.25,369.69 666.09,369.21 666.94,368.72 667.78,368.23 668.62,367.73 669.46,367.24 670.31,366.73 671.15,366.22 671.99,365.71 672.84,365.19 673.68,364.66 674.52,364.13 675.36,363.6 676.21,363.06 677.05,362.51 677.89,361.93 678.73,361.33 679.58,360.71 680.42,360.09 681.26,359.46 682.11,358.82 682.95,358.18 683.79,357.53 684.63,356.87 685.48,356.21 686.32,355.54 687.16,354.87 688,354.19 688.85,353.5 689.69,352.82 690.53,352.12 691.37,351.43 692.22,350.73 693.06,350.02 693.9,349.32 694.75,348.61 695.59,347.89 696.43,347.17 697.27,346.44 698.12,345.69 698.96,344.93 699.8,344.16 700.64,343.39 701.49,342.6 702.33,341.82 703.17,341.03 704.02,340.25 704.86,339.46 705.7,338.69 706.54,337.92 707.39,337.15 708.23,336.4 709.07,335.66 709.91,334.94 710.76,334.23 711.6,333.54 712.44,332.82 713.28,332.07 714.13,331.33 714.97,330.63 715.81,329.99 716.66,329.45 717.5,329.04 718.34,328.72 719.18,328.41 720.03,328.12 720.87,327.87 721.71,327.66 722.55,327.5 723.4,327.41 724.24,327.4 725.08,327.45 725.92,327.53 726.77,327.65 727.61,327.8 728.45,327.96 729.3,328.14 730.14,328.33 730.98,328.52 731.82,328.71 732.67,328.88 733.51,329.04 734.35,329.2 735.19,329.38 736.04,329.57 736.88,329.77 737.72,329.98 738.57,330.18 739.41,330.38 740.25,330.57 741.09,330.75 741.94,330.91 742.78,331.05 743.62,331.16 744.46,331.24 745.31,331.29 746.15,331.3 746.99,331.26 747.83,331.17 748.68,331.05 749.52,330.91 750.36,330.76 751.21,330.6 752.05,330.44 752.89,330.31 753.73,330.2 754.58,330.1 755.42,329.99 756.26,329.88 757.1,329.77 757.95,329.67 758.79,329.57 759.63,329.48 760.47,329.41 761.32,329.35 762.16,329.32 763,329.3 763.85,329.3 764.69,329.3 765.53,329.3 766.37,329.3 767.22,329.3 768.06,329.3 768.9,329.3 769.74,329.3 770.59,329.3 771.43,329.3 772.27,329.3 773.12,329.3 773.96,329.3 774.8,329.35 775.64,329.52 776.49,329.81 777.33,330.18 778.17,330.62 779.01,331.11 779.86,331.62 780.7,332.14 781.54,332.64 782.38,333.12 783.23,333.64 784.07,334.2 784.91,334.79 785.76,335.41 786.6,336.04 787.44,336.67 788.28,337.31 789.13,337.92 789.97,338.52 790.81,339.1 791.65,339.69 792.5,340.28 793.34,340.86 794.18,341.45 795.03,342.03 795.87,342.62 796.71,343.2 797.55,343.77 798.4,344.34 799.24,344.91 800.08,345.48 800.92,346.04 801.77,346.59 802.61,347.14 803.45,347.68 804.29,348.22 805.14,348.75 805.98,349.29 806.82,349.81 807.67,350.34 808.51,350.85 809.35,351.36 810.19,351.86 811.04,352.36 811.88,352.85 812.72,353.33 813.56,353.81 814.41,354.29 815.25,354.77 816.09,355.25 816.93,355.72 817.78,356.19 818.62,356.66 819.46,357.12 820.31,357.57 821.15,358.02 821.99,358.46 822.83,358.89 823.68,359.31 824.52,359.72 825.36,360.13 826.2,360.52 827.05,360.9 827.89,361.27 828.73,361.62 829.58,361.97 830.42,362.3 831.26,362.63 832.1,362.95 832.95,363.26 833.79,363.56 834.63,363.87 835.47,364.17 836.32,364.47 837.16,364.77 838,365.07 838.84,365.37 839.69,365.68 840.53,366 841.37,366.32 842.22,366.64 843.06,366.96 843.9,367.29 844.74,367.62 845.59,367.94 846.43,368.27 847.27,368.59 848.11,368.9 848.96,369.21 849.8,369.52 850.64,369.82 851.48,370.11 852.33,370.38 853.17,370.65 854.01,370.92 854.86,371.18 855.7,371.44 856.54,371.69 857.38,371.95 858.23,372.2 859.07,372.45 859.91,372.7 860.75,372.94 861.6,373.18 862.44,373.42 863.28,373.66 864.13,373.9 864.97,374.13 865.81,374.36 866.65,374.59 867.5,374.82 868.34,375.05 869.18,375.27 870.02,375.49 870.87,375.71 871.71,375.93 872.55,376.14 873.39,376.36 874.24,376.57 875.08,376.78 875.92,376.99 876.77,377.2 877.61,377.4 878.45,377.6 879.29,377.81 880.14,378.01 880.98,378.2 881.82,378.4 882.66,378.6 883.51,378.79 884.35,378.98 885.19,379.17 886.04,379.36 886.88,379.55 887.72,379.74 888.56,379.92 889.41,380.11 890.25,380.29 891.09,380.47 891.93,380.65 892.78,380.83 893.62,381 894.46,381.18 895.3,381.35 896.15,381.52 896.99,381.69 897.83,381.86 898.68,382.02 899.52,382.19 900.36,382.35 901.2,382.52 902.05,382.68 902.89,382.84 903.73,383 904.57,383.16 905.42,383.31 906.26,383.47 907.1,383.63 907.94,383.78 908.79,383.93 909.63,384.08 910.47,384.24 911.32,384.39 912.16,384.53 913,384.68 913.84,384.83 914.69,384.98 915.53,385.12 916.37,385.27 917.21,385.41 918.06,385.56 918.9,385.7 919.74,385.84 920.59,385.98 921.43,386.12 922.27,386.27 923.11,386.41 923.96,386.55 924.8,386.69 925.64,386.83 926.48,386.97 927.33,387.1 928.17,387.24 929.01,387.38 929.85,387.52 930.7,387.65 931.54,387.79 932.38,387.92 933.23,388.06 934.07,388.19 934.91,388.32 935.75,388.45 936.6,388.59 937.44,388.72 938.28,388.84 939.12,388.97 939.97,389.1 940.81,389.23 941.65,389.35 942.49,389.48 943.34,389.6 944.18,389.72 945.02,389.84 945.87,389.96 946.71,390.08 947.55,390.2 948.39,390.31 949.24,390.43 950.08,390.54 950.92,390.65 951.76,390.76 952.61,390.87 953.45,390.98 954.29,391.09 955.14,391.19 955.98,391.3 956.82,391.4 957.66,391.5 958.51,391.6 959.35,391.7 960.19,391.8 961.03,391.9 961.88,392 962.72,392.1 963.56,392.19 964.4,392.29 965.25,392.38 966.09,392.48 966.93,392.57 967.78,392.66 968.62,392.76 969.46,392.85 970.3,392.94 971.15,393.02 971.99,393.11 972.83,393.2 973.67,393.29 974.52,393.37 975.36,393.46 976.2,393.54 977.05,393.62 977.89,393.7 978.73,393.78 979.57,393.86 980.42,393.94 981.26,394.02 982.1,394.1 982.94,394.17 983.79,394.25 984.63,394.32 985.47,394.39 986.31,394.46 987.16,394.53 988,394.6" fill="none" stroke="#ff0000" stroke-width="1.25" stroke-linejoin="round"/>
<polyline points="567.5,410.8 568.34,410.45 569.19,410.11 570.03,409.77 570.87,409.43 571.71,409.09 572.56,408.75 573.4,408.41 574.24,408.08 575.08,407.74 575.93,407.41 576.77,407.08 577.61,406.75 578.45,406.43 579.3,406.1 580.14,405.78 580.98,405.45 581.83,405.13 582.67,404.82 583.51,404.5 584.35,404.18 585.2,403.87 586.04,403.56 586.88,403.25 587.72,402.94 588.57,402.64 589.41,402.34 590.25,402.04 591.1,401.74 591.94,401.44 592.78,401.15 593.62,400.85 594.47,400.57 595.31,400.28 596.15,400.01 596.99,399.73 597.84,399.46 598.68,399.19 599.52,398.93 600.36,398.67 601.21,398.41 602.05,398.15 602.89,397.9 603.74,397.65 604.58,397.4 605.42,397.15 606.26,396.9 607.11,396.65 607.95,396.4 608.79,396.15 609.63,395.9 610.48,395.65 611.32,395.4 612.16,395.15 613.01,394.89 613.85,394.64 614.69,394.38 615.53,394.12 616.38,393.85 617.22,393.59 618.06,393.32 618.9,393.04 619.75,392.77 620.59,392.48 621.43,392.2 622.27,391.91 623.12,391.61 623.96,391.31 624.8,391 625.65,390.69 626.49,390.37 627.33,390.05 628.17,389.72 629.02,389.39 629.86,389.06 630.7,388.72 631.54,388.38 632.39,388.04 633.23,387.69 634.07,387.33 634.91,386.98 635.76,386.62 636.6,386.26 637.44,385.89 638.29,385.52 639.13,385.15 639.97,384.77 640.81,384.4 641.66,384.01 642.5,383.63 643.34,383.24 644.18,382.85 645.03,382.46 645.87,382.06 646.71,381.66 647.56,381.26 648.4,380.85 649.24,380.45 650.08,380.04 650.93,379.62 651.77,379.21 652.61,378.79 653.45,378.37 654.3,377.95 655.14,377.53 655.98,377.1 656.82,376.67 657.67,376.23 658.51,375.79 659.35,375.35 660.2,374.9 661.04,374.45 661.88,374 662.72,373.54 663.57,373.07 664.41,372.6 665.25,372.13 666.09,371.65 666.94,371.17 667.78,370.68 668.62,370.18 669.46,369.68 670.31,369.18 671.15,368.66 671.99,368.15 672.84,367.62 673.68,367.09 674.52,366.56 675.36,366.01 676.21,365.46 677.05,364.89 677.89,364.29 678.73,363.67 679.58,363.03 680.42,362.37 681.26,361.71 682.11,361.04 682.95,360.36 683.79,359.67 684.63,358.97 685.48,358.27 686.32,357.55 687.16,356.84 688,356.11 688.85,355.39 689.69,354.65 690.53,353.92 691.37,353.18 692.22,352.45 693.06,351.71 693.9,350.97 694.75,350.23 695.59,349.5 696.43,348.76 697.27,348 698.12,347.22 698.96,346.44 699.8,345.64 700.64,344.84 701.49,344.04 702.33,343.24 703.17,342.44 704.02,341.64 704.86,340.85 705.7,340.07 706.54,339.31 707.39,338.56 708.23,337.83 709.07,337.12 709.91,336.44 710.76,335.78 711.6,335.15 712.44,334.51 713.28,333.86 714.13,333.22 714.97,332.62 715.81,332.09 716.66,331.65 717.5,331.33 718.34,331.1 719.18,330.88 720.03,330.68 720.87,330.51 721.71,330.37 722.55,330.27 723.4,330.21 724.24,330.2 725.08,330.24 725.92,330.32 726.77,330.43 727.61,330.57 728.45,330.73 729.3,330.9 730.14,331.09 730.98,331.28 731.82,331.48 732.67,331.67 733.51,331.85 734.35,332.07 735.19,332.34 736.04,332.62 736.88,332.9 737.72,333.14 738.57,333.31 739.41,333.4 740.25,333.4 741.09,333.4 741.94,333.4 742.78,333.4 743.62,333.4 744.46,333.4 745.31,333.4 746.15,333.4 746.99,333.4 747.83,333.4 748.68,333.4 749.52,333.4 750.36,333.4 751.21,333.4 752.05,333.4 752.89,333.4 753.73,333.4 754.58,333.4 755.42,333.4 756.26,333.4 757.1,333.4 757.95,333.4 758.79,333.4 759.63,333.4 760.47,333.4 761.32,333.4 762.16,333.4 763,333.4 763.85,333.4 764.69,333.4 765.53,333.4 766.37,333.4 767.22,333.43 768.06,333.49 768.9,333.6 769.74,333.73 770.59,333.9 771.43,334.09 772.27,334.3 773.12,334.53 773.96,334.77 774.8,335.03 775.64,335.28 776.49,335.59 777.33,335.98 778.17,336.44 779.01,336.97 779.86,337.53 780.7,338.11 781.54,338.7 782.38,339.28 783.23,339.83 784.07,340.35 784.91,340.87 785.76,341.39 786.6,341.91 787.44,342.44 788.28,342.96 789.13,343.48 789.97,344 790.81,344.53 791.65,345.06 792.5,345.6 793.34,346.14 794.18,346.68 795.03,347.22 795.87,347.76 796.71,348.3 797.55,348.83 798.4,349.35 799.24,349.86 800.08,350.37 800.92,350.87 801.77,351.35 802.61,351.81 803.45,352.27 804.29,352.71 805.14,353.14 805.98,353.56 806.82,353.97 807.67,354.38 808.51,354.79 809.35,355.2 810.19,355.61 811.04,356.02 811.88,356.44 812.72,356.87 813.56,357.3 814.41,357.75 815.25,358.19 816.09,358.64 816.93,359.1 817.78,359.55 818.62,360 819.46,360.45 820.31,360.89 821.15,361.33 821.99,361.77 822.83,362.19 823.68,362.6 824.52,363 825.36,363.39 826.2,363.76 827.05,364.12 827.89,364.45 828.73,364.78 829.58,365.08 830.42,365.38 831.26,365.67 832.1,365.95 832.95,366.22 833.79,366.49 834.63,366.75 835.47,367.02 836.32,367.28 837.16,367.55 838,367.82 838.84,368.1 839.69,368.39 840.53,368.69 841.37,368.99 842.22,369.31 843.06,369.63 843.9,369.95 844.74,370.28 845.59,370.61 846.43,370.93 847.27,371.26 848.11,371.58 848.96,371.9 849.8,372.21 850.64,372.51 851.48,372.8 852.33,373.08 853.17,373.35 854.01,373.62 854.86,373.88 855.7,374.13 856.54,374.39 857.38,374.64 858.23,374.89 859.07,375.14 859.91,375.38 860.75,375.62 861.6,375.87 862.44,376.1 863.28,376.34 864.13,376.57 864.97,376.8 865.81,377.03 866.65,377.26 867.5,377.49 868.34,377.71 869.18,377.93 870.02,378.15 870.87,378.37 871.71,378.58 872.55,378.79 873.39,379.01 874.24,379.21 875.08,379.42 875.92,379.63 876.77,379.83 877.61,380.03 878.45,380.23 879.29,380.43 880.14,380.63 880.98,380.83 881.82,381.02 882.66,381.21 883.51,381.41 884.35,381.59 885.19,381.78 886.04,381.97 886.88,382.16 887.72,382.34 888.56,382.52 889.41,382.7 890.25,382.88 891.09,383.06 891.93,383.24 892.78,383.41 893.62,383.58 894.46,383.75 895.3,383.92 896.15,384.09 896.99,384.26 897.83,384.42 898.68,384.59 899.52,384.75 900.36,384.91 901.2,385.07 902.05,385.23 902.89,385.39 903.73,385.54 904.57,385.7 905.42,385.85 906.26,386 907.1,386.16 907.94,386.31 908.79,386.46 909.63,386.61 910.47,386.76 911.32,386.9 912.16,387.05 913,387.2 913.84,387.34 914.69,387.49 915.53,387.63 916.37,387.77 917.21,387.92 918.06,388.06 918.9,388.2 919.74,388.34 920.59,388.48 921.43,388.62 922.27,388.76 923.11,388.9 923.96,389.04 924.8,389.18 925.64,389.32 926.48,389.46 927.33,389.6 928.17,389.74 929.01,389.88 929.85,390.01 930.7,390.15 931.54,390.29 932.38,390.42 933.23,390.56 934.07,390.69 934.91,390.82 935.75,390.96 936.6,391.09 937.44,391.22 938.28,391.35 939.12,391.48 939.97,391.61 940.81,391.73 941.65,391.86 942.49,391.98 943.34,392.11 944.18,392.23 945.02,392.35 945.87,392.47 946.71,392.59 947.55,392.71 948.39,392.82 949.24,392.94 950.08,393.05 950.92,393.16 951.76,393.27 952.61,393.38 953.45,393.49 954.29,393.59 955.14,393.7 955.98,393.8 956.82,393.9 957.66,394 958.51,394.1 959.35,394.2 960.19,394.29 961.03,394.39 961.88,394.49 962.72,394.58 963.56,394.68 964.4,394.77 965.25,394.86 966.09,394.95 966.93,395.04 967.78,395.14 968.62,395.22 969.46,395.31 970.3,395.4 971.15,395.49 971.99,395.57 972.83,395.66 973.67,395.74 974.52,395.82 975.36,395.9 976.2,395.99 977.05,396.07 977.89,396.14 978.73,396.22 979.57,396.3 980.42,396.37 981.26,396.45 982.1,396.52 982.94,396.59 983.79,396.66 984.63,396.73 985.47,396.8 986.31,396.87 987.16,396.94 988,397" fill="none" stroke="#ff0000" stroke-width="1.25" stroke-linejoin="round"/>
</g>
<text x="558.5" y="301.4" font-size="14" fill="#c2c2c2" text-anchor="end" stroke="#c2c2c2" stroke-width="0.05">0</text>
<text x="558.4" y="573.4" font-size="14" fill="#c2c2c2" text-anchor="end" stroke="#c2c2c2" stroke-width="0.05">-90dB</text>
<text x="558.5" y="278.85" font-size="14" fill="#c2c2c2" text-anchor="end" stroke="#c2c2c2" stroke-width="0.05">5</text>
<text x="558.4" y="550.58" font-size="14" fill="#c2c2c2" text-anchor="end" stroke="#c2c2c2" stroke-width="0.05">-80dB</text>
<text x="558.5" y="256.31" font-size="14" fill="#c2c2c2" text-anchor="end" stroke="#c2c2c2" stroke-width="0.05">10</text>
<text x="558.4" y="527.76" font-size="14" fill="#c2c2c2" text-anchor="end" stroke="#c2c2c2" stroke-width="0.05">-70dB</text>
<text x="558.5" y="233.76" font-size="14" fill="#c2c2c2" text-anchor="end" stroke="#c2c2c2" stroke-width="0.05">15</text>
<text x="558.4" y="504.95" font-size="14" fill="#c2c2c2" text-anchor="end" stroke="#c2c2c2" stroke-width="0.05">-60dB</text>
<text x="558.5" y="211.22" font-size="14" fill="#c2c2c2" text-anchor="end" stroke="#c2c2c2" stroke-width="0.05">20</text>
<text x="558.4" y="482.13" font-size="14" fill="#c2c2c2" text-anchor="end" stroke="#c2c2c2" stroke-width="0.05">-50dB</text>
<text x="558.5" y="188.67" font-size="14" fill="#c2c2c2" text-anchor="end" stroke="#c2c2c2" stroke-width="0.05">25</text>
<text x="558.4" y="459.31" font-size="14" fill="#c2c2c2" text-anchor="end" stroke="#c2c2c2" stroke-width="0.05">-40dB</text>
<text x="558.5" y="166.13" font-size="14" fill="#c2c2c2" text-anchor="end" stroke="#c2c2c2" stroke-width="0.05">30</text>
<text x="558.4" y="436.49" font-size="14" fill="#c2c2c2" text-anchor="end" stroke="#c2c2c2" stroke-width="0.05">-30dB</text>
<text x="558.5" y="143.58" font-size="14" fill="#c2c2c2" text-anchor="end" stroke="#c2c2c2" stroke-width="0.05">35</text>
<text x="558.4" y="413.67" font-size="14" fill="#c2c2c2" text-anchor="end" stroke="#c2c2c2" stroke-width="0.05">-20dB</text>
<text x="558.5" y="121.04" font-size="14" fill="#c2c2c2" text-anchor="end" stroke="#c2c2c2" stroke-width="0.05">40</text>
<text x="558.4" y="390.85" font-size="14" fill="#c2c2c2" text-anchor="end" stroke="#c2c2c2" stroke-width="0.05">-10dB</text>
<text x="558.5" y="98.49" font-size="14" fill="#c2c2c2" text-anchor="end" stroke="#c2c2c2" stroke-width="0.05">45</text>
<text x="558.4" y="368.04" font-size="14" fill="#c2c2c2" text-anchor="end" stroke="#c2c2c2" stroke-width="0.05">0dB</text>
<text x="558.5" y="75.95" font-size="14" fill="#c2c2c2" text-anchor="end" stroke="#c2c2c2" stroke-width="0.05">50</text>
<text x="558.4" y="345.22" font-size="14" fill="#c2c2c2" text-anchor="end" stroke="#c2c2c2" stroke-width="0.05">10dB</text>
<text x="558.5" y="53.4" font-size="14" fill="#c2c2c2" text-anchor="end" stroke="#c2c2c2" stroke-width="0.05">55</text>
<text x="558.4" y="322.4" font-size="14" fill="#c2c2c2" text-anchor="end" stroke="#c2c2c2" stroke-width="0.05">20dB</text>
<text x="567" y="589.2" font-size="14" fill="#c2c2c2" text-anchor="middle" textLength="45.2" lengthAdjust="spacingAndGlyphs" stroke="#c2c2c2" stroke-width="0.05">11MHz</text>
<text x="623.66" y="589.2" font-size="14" fill="#c2c2c2" text-anchor="middle" textLength="45.2" lengthAdjust="spacingAndGlyphs" stroke="#c2c2c2" stroke-width="0.05">12MHz</text>
<text x="724.04" y="589.2" font-size="14" fill="#c2c2c2" text-anchor="middle" textLength="45.2" lengthAdjust="spacingAndGlyphs" stroke="#c2c2c2" stroke-width="0.05">14MHz</text>
<text x="810.99" y="589.2" font-size="14" fill="#c2c2c2" text-anchor="middle" textLength="45.2" lengthAdjust="spacingAndGlyphs" stroke="#c2c2c2" stroke-width="0.05">16MHz</text>
<text x="887.69" y="589.2" font-size="14" fill="#c2c2c2" text-anchor="middle" textLength="45.2" lengthAdjust="spacingAndGlyphs" stroke="#c2c2c2" stroke-width="0.05">18MHz</text>
<text x="956.3" y="589.2" font-size="14" fill="#c2c2c2" text-anchor="middle" textLength="45.2" lengthAdjust="spacingAndGlyphs" stroke="#c2c2c2" stroke-width="0.05">20MHz</text>
<text x="632.9" y="42.8" font-size="14" fill="#0000ff" text-anchor="start" textLength="78.6" lengthAdjust="spacingAndGlyphs" font-weight="bold">B1(s11,s22)</text>
<text x="802.2" y="42.8" font-size="14" fill="#ff0000" text-anchor="start" textLength="159.6" lengthAdjust="spacingAndGlyphs" font-weight="bold">kfactor(s11,s21,s12,s22)</text>
<text x="594" y="311.9" font-size="14" fill="#00ff00" text-anchor="start" textLength="49.2" lengthAdjust="spacingAndGlyphs" stroke="#00ff00" stroke-width="0.4">S11(v2)</text>
<text x="699" y="311.9" font-size="14" fill="#ff0000" text-anchor="start" textLength="49" lengthAdjust="spacingAndGlyphs" stroke="#ff0000" stroke-width="0.4">S21(v2)</text>
<text x="804" y="311.9" font-size="14" fill="#0000ff" text-anchor="start" textLength="49" lengthAdjust="spacingAndGlyphs" stroke="#0000ff" stroke-width="0.4">S12(v2)</text>
<text x="909" y="311.9" font-size="14" fill="#ff00ff" text-anchor="start" textLength="49.1" lengthAdjust="spacingAndGlyphs" stroke="#ff00ff" stroke-width="0.4">S22(v2)</text>
</g>
</svg>
</body></html>
